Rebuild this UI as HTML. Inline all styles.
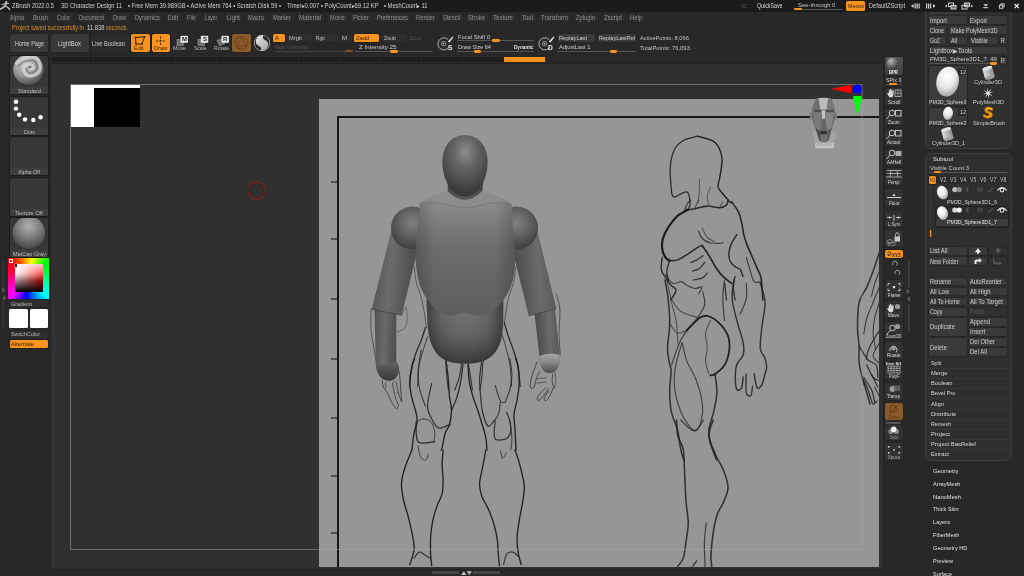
<!DOCTYPE html>
<html><head><meta charset="utf-8"><title>ZBrush</title>
<style>
html,body{margin:0;padding:0;}
body{width:1024px;height:576px;overflow:hidden;position:relative;background:#282828;font-family:"Liberation Sans",sans-serif;}
div,span,svg{position:absolute;}
span{white-space:nowrap;transform-origin:0 50%;display:block;}
</style></head><body><div id="w" style="left:0;top:0;width:1024px;height:576px;will-change:transform;">
<div style="left:925.5px;top:5px;width:85px;height:143px;background:#2f2f2f;border-radius:4px;box-shadow:0 0 0 0.7px #454545;"></div>
<div style="left:925.5px;top:154px;width:85px;height:306.4px;background:#2f2f2f;border-radius:4px;box-shadow:0 0 0 0.7px #454545;"></div>
<div style="left:0px;top:0px;width:1024px;height:11.5px;background:#1b1b1b;"></div>
<div style="left:51px;top:63.6px;width:831.5px;height:505.6px;background:#303030;box-shadow:0 0 0 1px #222;"></div>
<div style="left:52px;top:57px;width:493px;height:4.5px;background:#1d1d1d;"></div>
<div style="left:93px;top:57px;width:1px;height:4.5px;background:#2a2a2a;"></div>
<div style="left:134px;top:57px;width:1px;height:4.5px;background:#2a2a2a;"></div>
<div style="left:175px;top:57px;width:1px;height:4.5px;background:#2a2a2a;"></div>
<div style="left:216px;top:57px;width:1px;height:4.5px;background:#2a2a2a;"></div>
<div style="left:257px;top:57px;width:1px;height:4.5px;background:#2a2a2a;"></div>
<div style="left:298px;top:57px;width:1px;height:4.5px;background:#2a2a2a;"></div>
<div style="left:339px;top:57px;width:1px;height:4.5px;background:#2a2a2a;"></div>
<div style="left:380px;top:57px;width:1px;height:4.5px;background:#2a2a2a;"></div>
<div style="left:421px;top:57px;width:1px;height:4.5px;background:#2a2a2a;"></div>
<div style="left:462px;top:57px;width:1px;height:4.5px;background:#2a2a2a;"></div>
<div style="left:504px;top:57px;width:41px;height:4.5px;background:#f7931e;"></div>
<div style="left:319px;top:99px;width:560.2px;height:468px;background:#969696;"></div>
<svg style="left:0;top:0" width="1024" height="576" viewBox="0 0 1024 576">
<defs>
<radialGradient id="gh" cx="0.5" cy="0.28" r="0.66"><stop offset="0" stop-color="#8e8e8e"/><stop offset="0.35" stop-color="#686868"/><stop offset="0.75" stop-color="#4c4c4c"/><stop offset="1" stop-color="#3a3a3a"/></radialGradient>
<radialGradient id="gs" cx="0.5" cy="0.38" r="0.62"><stop offset="0" stop-color="#808080"/><stop offset="0.55" stop-color="#5e5e5e"/><stop offset="1" stop-color="#3e3e3e"/></radialGradient>
<linearGradient id="gt" x1="0" y1="0" x2="0" y2="1"><stop offset="0" stop-color="#8e8e8e"/><stop offset="0.12" stop-color="#8a8a8a"/><stop offset="0.27" stop-color="#7c7c7c"/><stop offset="0.44" stop-color="#6e6e6e"/><stop offset="0.7" stop-color="#666666"/><stop offset="1" stop-color="#5e5e5e"/></linearGradient>
<linearGradient id="gcl" x1="0" y1="0" x2="0" y2="1"><stop offset="0" stop-color="#626262"/><stop offset="1" stop-color="#3a3a3a"/></linearGradient>
<linearGradient id="gcap" x1="0" y1="0" x2="0" y2="1"><stop offset="0" stop-color="#a8a8a8"/><stop offset="0.45" stop-color="#888"/><stop offset="1" stop-color="#4c4c4c"/></linearGradient>
<linearGradient id="gts" x1="0" y1="0" x2="1" y2="0"><stop offset="0" stop-color="#000" stop-opacity="0.2"/><stop offset="0.2" stop-color="#000" stop-opacity="0"/><stop offset="0.8" stop-color="#000" stop-opacity="0"/><stop offset="1" stop-color="#000" stop-opacity="0.2"/></linearGradient>
<radialGradient id="gb" cx="0.5" cy="0.3" r="0.72"><stop offset="0" stop-color="#727272"/><stop offset="0.45" stop-color="#626262"/><stop offset="0.8" stop-color="#484848"/><stop offset="1" stop-color="#343434"/></radialGradient>
<linearGradient id="gal" x1="0" y1="0" x2="1" y2="0.15"><stop offset="0" stop-color="#505050"/><stop offset="0.45" stop-color="#6b6b6b"/><stop offset="1" stop-color="#484848"/></linearGradient>
<linearGradient id="gar" x1="0" y1="0" x2="1" y2="-0.15"><stop offset="0" stop-color="#4a4a4a"/><stop offset="0.55" stop-color="#6b6b6b"/><stop offset="1" stop-color="#505050"/></linearGradient>
<linearGradient id="gn" x1="0" y1="0" x2="0" y2="1"><stop offset="0" stop-color="#404040"/><stop offset="0.6" stop-color="#4e4e4e"/><stop offset="1" stop-color="#666"/></linearGradient>
</defs>
<path d="M338 567 V117 H879" fill="none" stroke="#161616" stroke-width="2"/>
<path d="M331 182 H338" stroke="#222" stroke-width="1.2"/>
<path d="M331 239 H338" stroke="#222" stroke-width="1.2"/>
<path d="M331 299 H338" stroke="#222" stroke-width="1.2"/>
<path d="M331 359 H338" stroke="#222" stroke-width="1.2"/>
<path d="M331 418 H338" stroke="#222" stroke-width="1.2"/>
<path d="M331 476 H338" stroke="#222" stroke-width="1.2"/>
<path d="M331 533 H338" stroke="#222" stroke-width="1.2"/>
<filter id="bl" x="-5%" y="-5%" width="110%" height="110%"><feGaussianBlur stdDeviation="0.42"/></filter><clipPath id="gc"><rect x="319" y="99" width="560.4" height="468"/></clipPath><g clip-path="url(#gc)"><g filter="url(#bl)">
<path d="M697.8 136.2 C695.5 136.9 687.7 138.1 683.8 140.3 C679.8 142.6 676.6 145.3 674.4 149.7 C672.1 154.1 670.8 160.6 670.3 166.9 C669.8 173.1 670.7 182.2 671.2 187.2 C671.8 192.2 671.1 196.1 673.8 196.9 C676.4 197.7 684.2 190.6 686.9 191.9 C689.6 193.1 690.0 201.2 690.0 204.4 C690.0 207.5 687.4 209.6 686.9 210.6" fill="none" stroke="#1e1e1e" stroke-width="1.30" stroke-opacity="0.89" stroke-linecap="round"/>
<path d="M697.8 136.2 C700.7 137.3 711.0 139.0 715.0 142.5 C719.0 146.0 721.0 151.9 721.9 157.5 C722.7 163.1 720.6 171.3 720.0 176.2 C719.4 181.2 717.5 184.1 718.1 187.2 C718.8 190.3 721.7 192.4 723.8 195.0 C725.8 197.6 729.5 201.5 730.6 202.8" fill="none" stroke="#1e1e1e" stroke-width="1.43" stroke-opacity="0.95" stroke-linecap="round"/>
<path d="M699.4 179.4 C699.4 181.5 699.6 188.0 699.4 191.9 C699.1 195.8 698.1 201.0 697.8 202.8" fill="none" stroke="#1e1e1e" stroke-width="0.91" stroke-opacity="0.63" stroke-linecap="round"/>
<path d="M710.3 187.2 C709.8 188.8 707.4 193.7 707.2 196.6 C706.9 199.4 708.5 203.1 708.8 204.4" fill="none" stroke="#1e1e1e" stroke-width="0.91" stroke-opacity="0.63" stroke-linecap="round"/>
<path d="M688.2 209.5 C686.5 210.6 681.0 212.9 677.8 215.6 C674.6 218.4 671.6 222.3 669.1 226.0 C666.6 229.8 664.2 234.4 663.0 238.2 C661.9 242.0 661.9 245.6 662.2 248.6 C662.4 251.6 663.6 254.4 664.8 256.4 C665.9 258.4 668.4 260.0 669.1 260.8" fill="none" stroke="#1e1e1e" stroke-width="2.21" stroke-opacity="1.00" stroke-linecap="round"/>
<path d="M669.1 260.8 C670.5 260.6 674.6 261.1 677.8 259.9 C681.0 258.7 684.7 256.0 688.2 253.8 C691.7 251.6 696.3 248.3 698.6 246.9 C700.9 245.5 701.5 245.7 702.1 245.5" fill="none" stroke="#1e1e1e" stroke-width="1.43" stroke-opacity="0.89" stroke-linecap="round"/>
<path d="M684.7 210.4 C686.5 210.1 691.4 209.4 695.1 208.7 C698.9 208.0 703.2 206.2 707.3 206.1 C711.3 205.9 716.3 208.0 719.4 207.8 C722.6 207.7 724.9 206.5 726.4 205.2 C727.8 203.9 727.8 200.9 728.1 200.0" fill="none" stroke="#1e1e1e" stroke-width="1.56" stroke-opacity="0.89" stroke-linecap="round"/>
<path d="M731.6 201.7 C732.8 203.5 736.8 208.4 738.5 212.2 C740.3 215.9 741.1 220.5 742.0 224.3 C742.9 228.1 742.9 231.2 743.8 234.7 C744.6 238.2 745.8 241.4 747.2 245.1 C748.7 248.9 750.7 253.2 752.4 257.3 C754.2 261.3 756.2 266.0 757.6 269.4 C759.1 272.9 760.2 273.0 761.1 278.1 C762.0 283.2 762.6 296.4 762.8 300.0" fill="none" stroke="#1e1e1e" stroke-width="1.56" stroke-opacity="0.95" stroke-linecap="round"/>
<path d="M698.6 231.2 C699.2 232.4 700.3 236.3 702.1 238.2 C703.8 240.1 706.1 241.7 709.0 242.5 C711.9 243.4 717.1 243.4 719.4 243.4 C721.8 243.4 722.3 242.7 722.9 242.5" fill="none" stroke="#1e1e1e" stroke-width="1.30" stroke-opacity="0.73" stroke-linecap="round"/>
<path d="M702.1 227.8 C703.0 229.4 705.3 235.0 707.3 237.3 C709.3 239.6 713.1 240.9 714.2 241.7" fill="none" stroke="#1e1e1e" stroke-width="1.04" stroke-opacity="0.58" stroke-linecap="round"/>
<path d="M736.8 234.7 C735.9 236.2 732.9 240.5 731.6 243.4 C730.3 246.3 729.3 249.2 729.0 252.1 C728.7 255.0 728.8 258.3 729.9 260.8 C730.9 263.2 733.3 265.4 735.1 266.8 C736.8 268.3 739.0 267.9 740.3 269.4 C741.6 271.0 742.4 275.2 742.9 276.4" fill="none" stroke="#1e1e1e" stroke-width="1.43" stroke-opacity="0.89" stroke-linecap="round"/>
<path d="M702.1 245.5 C703.2 247.2 706.7 251.9 709.0 255.6 C711.3 259.3 713.7 264.2 716.0 267.7 C718.3 271.2 720.3 273.8 722.9 276.4 C725.5 279.0 730.2 282.2 731.6 283.3" fill="none" stroke="#1e1e1e" stroke-width="1.69" stroke-opacity="0.95" stroke-linecap="round"/>
<path d="M690.8 262.5 C691.8 262.1 694.8 261.1 696.9 259.9 C698.9 258.7 701.9 256.3 703.0 255.6" fill="none" stroke="#1e1e1e" stroke-width="1.30" stroke-opacity="0.79" stroke-linecap="round"/>
<path d="M692.5 271.2 C693.7 270.7 697.5 270.0 699.5 268.6 C701.5 267.1 703.8 263.5 704.7 262.5" fill="none" stroke="#1e1e1e" stroke-width="1.30" stroke-opacity="0.79" stroke-linecap="round"/>
<path d="M693.4 279.9 C694.8 279.6 699.8 279.3 702.1 278.1 C704.4 277.0 706.4 273.8 707.3 272.9" fill="none" stroke="#1e1e1e" stroke-width="1.30" stroke-opacity="0.79" stroke-linecap="round"/>
<path d="M662.2 257.3 C662.0 259.3 660.9 266.3 661.3 269.4 C661.7 272.6 663.2 273.8 664.8 276.4 C666.3 279.0 669.0 282.8 670.8 285.1 C672.7 287.4 676.0 287.8 676.0 290.3 C676.0 292.8 671.7 298.4 670.8 300.0" fill="none" stroke="#1e1e1e" stroke-width="1.43" stroke-opacity="0.89" stroke-linecap="round"/>
<path d="M665.6 274.7 C666.8 276.1 670.0 282.2 672.6 283.3 C675.2 284.5 678.9 281.3 681.2 281.6 C683.6 281.9 684.1 283.9 686.5 285.1 C688.8 286.2 692.5 288.3 695.1 288.5 C697.7 288.8 701.5 285.9 702.1 286.8 C702.7 287.7 699.2 292.6 698.6 293.8" fill="none" stroke="#1e1e1e" stroke-width="1.17" stroke-opacity="0.73" stroke-linecap="round"/>
<path d="M724.7 283.3 L726.4 300.0" fill="none" stroke="#1e1e1e" stroke-width="1.30" stroke-opacity="0.84" stroke-linecap="round"/>
<path d="M735.1 276.4 C734.8 278.1 733.3 282.9 733.3 286.8 C733.3 290.7 734.8 297.8 735.1 300.0" fill="none" stroke="#1e1e1e" stroke-width="1.30" stroke-opacity="0.84" stroke-linecap="round"/>
<path d="M746.4 257.3 C746.9 259.3 748.5 265.4 749.8 269.4 C751.1 273.5 752.3 279.6 754.2 281.6 C756.0 283.6 760.0 281.6 761.1 281.6" fill="none" stroke="#1e1e1e" stroke-width="1.17" stroke-opacity="0.73" stroke-linecap="round"/>
<path d="M684.7 210.4 C685.2 209.3 686.3 205.2 687.3 203.5 C688.3 201.7 690.2 200.6 690.8 200.0" fill="none" stroke="#1e1e1e" stroke-width="1.17" stroke-opacity="0.73" stroke-linecap="round"/>
<path d="M695.1 207.8 L698.6 200.0" fill="none" stroke="#1e1e1e" stroke-width="1.04" stroke-opacity="0.63" stroke-linecap="round"/>
<path d="M719.4 207.8 L722.9 201.7" fill="none" stroke="#1e1e1e" stroke-width="1.04" stroke-opacity="0.63" stroke-linecap="round"/>
<path d="M665.0 280.0 C665.5 283.1 667.3 291.5 668.1 298.8 C668.9 306.0 669.8 315.4 669.7 323.8 C669.6 332.1 667.5 342.0 667.5 348.8 C667.5 355.5 669.1 360.7 669.7 364.4 C670.3 368.0 671.2 366.5 671.2 370.6 C671.2 374.8 669.7 382.6 669.7 389.4 C669.7 396.1 669.9 404.5 671.2 411.2 C672.6 418.0 675.9 423.8 677.5 430.0 C679.1 436.2 679.6 443.8 680.6 448.8 C681.7 453.8 683.2 458.1 683.8 460.0" fill="none" stroke="#1e1e1e" stroke-width="1.56" stroke-opacity="0.84" stroke-linecap="round"/>
<path d="M686.9 330.0 C689.0 328.0 696.0 320.5 699.4 318.1 C702.8 315.8 704.1 315.3 707.2 315.9 C710.3 316.6 714.7 319.1 718.1 322.2 C721.5 325.3 725.6 330.3 727.5 334.7 C729.4 339.1 729.8 343.8 729.4 348.8 C729.0 353.7 727.3 360.2 725.0 364.4 C722.7 368.5 718.1 371.9 715.6 373.8 C713.2 375.6 711.2 375.1 710.3 375.3" fill="none" stroke="#1e1e1e" stroke-width="1.82" stroke-opacity="0.95" stroke-linecap="round"/>
<path d="M710.3 320.6 C709.5 322.7 706.1 328.7 705.6 333.1 C705.1 337.6 707.2 342.5 707.2 347.2 C707.2 351.9 705.4 356.8 705.6 361.2 C705.9 365.7 708.2 371.7 708.8 373.8" fill="none" stroke="#1e1e1e" stroke-width="1.04" stroke-opacity="0.63" stroke-linecap="round"/>
<path d="M715.0 373.8 C715.3 376.9 717.1 386.2 716.9 392.5 C716.7 398.8 715.1 405.0 713.8 411.2 C712.4 417.5 709.3 424.8 708.8 430.0 C708.2 435.2 709.0 437.5 710.3 442.5 C711.6 447.5 715.5 457.1 716.6 460.0" fill="none" stroke="#1e1e1e" stroke-width="1.56" stroke-opacity="0.84" stroke-linecap="round"/>
<path d="M682.2 342.5 C683.0 345.6 684.5 355.0 686.9 361.2 C689.2 367.5 693.6 372.7 696.2 380.0 C698.9 387.3 701.7 398.2 702.5 405.0 C703.3 411.8 702.3 416.4 701.2 420.6 C700.2 424.9 698.1 429.6 696.2 430.6 C694.4 431.7 692.6 430.1 690.0 426.9 C687.4 423.6 683.2 418.0 680.6 411.2 C678.0 404.5 675.2 394.1 674.4 386.2 C673.6 378.4 674.6 371.7 675.9 364.4 C677.2 357.1 681.1 346.1 682.2 342.5" fill="none" stroke="#1e1e1e" stroke-width="1.17" stroke-opacity="0.68" stroke-linecap="round"/>
<path d="M733.8 280.0 C733.5 283.1 731.7 292.0 732.2 298.8 C732.7 305.5 735.1 313.3 736.9 320.6 C738.7 327.9 742.1 336.8 743.1 342.5 C744.2 348.2 744.2 351.4 743.1 355.0 C742.1 358.6 738.2 360.7 736.9 364.4 C735.6 368.0 735.3 372.7 735.3 376.9 C735.3 381.0 735.8 387.6 736.9 389.4 C737.9 391.2 740.5 389.9 741.6 387.8 C742.6 385.7 742.9 378.7 743.1 376.9" fill="none" stroke="#1e1e1e" stroke-width="1.43" stroke-opacity="0.84" stroke-linecap="round"/>
<path d="M760.3 283.1 C761.1 286.2 764.7 294.6 765.0 301.9 C765.3 309.2 762.7 319.1 761.9 326.9 C761.1 334.7 759.8 343.5 760.3 348.8 C760.8 354.0 764.0 355.0 765.0 358.1 C766.0 361.2 766.6 364.9 766.6 367.5 C766.6 370.1 765.8 370.9 765.0 373.8 C764.2 376.6 763.2 382.3 761.9 384.7 C760.6 387.0 758.5 389.6 757.2 387.8 C755.9 386.0 754.6 376.1 754.1 373.8" fill="none" stroke="#1e1e1e" stroke-width="1.43" stroke-opacity="0.84" stroke-linecap="round"/>
<path d="M746.2 373.8 C746.2 376.9 745.5 388.9 746.2 392.5 C747.0 396.1 749.9 396.7 750.9 395.6 C752.0 394.6 752.2 387.8 752.5 386.2" fill="none" stroke="#1e1e1e" stroke-width="1.30" stroke-opacity="0.84" stroke-linecap="round"/>
<path d="M746.2 283.1 C746.2 285.7 747.3 293.5 746.2 298.8 C745.2 304.0 741.0 311.8 740.0 314.4" fill="none" stroke="#1e1e1e" stroke-width="1.17" stroke-opacity="0.73" stroke-linecap="round"/>
<path d="M724.4 280.0 C724.1 283.1 722.8 292.0 722.8 298.8 C722.8 305.5 724.1 317.0 724.4 320.6" fill="none" stroke="#1e1e1e" stroke-width="1.17" stroke-opacity="0.73" stroke-linecap="round"/>
<path d="M671.2 298.8 C672.8 300.8 675.9 308.0 680.6 311.2 C685.3 314.5 696.2 317.0 699.4 318.1" fill="none" stroke="#1e1e1e" stroke-width="1.04" stroke-opacity="0.63" stroke-linecap="round"/>
<path d="M669.7 323.8 C671.0 325.3 674.6 332.1 677.5 333.1 C680.4 334.2 685.3 330.5 686.9 330.0" fill="none" stroke="#1e1e1e" stroke-width="1.04" stroke-opacity="0.63" stroke-linecap="round"/>
<path d="M702.8 291.6 C703.1 293.9 705.7 300.7 704.4 305.6 C703.1 310.6 698.6 316.0 695.0 321.2 C691.4 326.5 685.9 331.1 682.5 336.9 C679.1 342.6 676.5 350.9 674.7 355.6 C672.9 360.3 672.1 363.4 671.6 365.0" fill="none" stroke="#1e1e1e" stroke-width="1.17" stroke-opacity="0.73" stroke-linecap="round"/>
<path d="M666.9 280.6 C667.7 284.3 670.0 295.7 671.6 302.5 C673.1 309.3 675.2 314.5 676.2 321.2 C677.3 328.0 677.6 339.5 677.8 343.1" fill="none" stroke="#1e1e1e" stroke-width="1.04" stroke-opacity="0.63" stroke-linecap="round"/>
<path d="M670.0 258.8 C669.5 260.8 667.1 267.6 666.9 271.2 C666.6 274.9 668.2 279.1 668.4 280.6" fill="none" stroke="#1e1e1e" stroke-width="1.30" stroke-opacity="0.84" stroke-linecap="round"/>
<path d="M676.5 420.0 C676.8 422.7 676.8 431.3 677.9 436.2 C679.0 441.2 682.2 443.5 683.3 449.8 C684.4 456.1 684.2 465.6 684.7 474.1 C685.1 482.7 685.4 493.1 686.0 501.2 C686.6 509.3 688.2 516.1 688.2 522.9 C688.2 529.6 686.8 536.0 686.0 541.8 C685.2 547.7 684.7 554.0 683.3 558.1 C682.0 562.1 678.8 564.8 677.9 566.2" fill="none" stroke="#1e1e1e" stroke-width="1.56" stroke-opacity="0.84" stroke-linecap="round"/>
<path d="M713.1 420.0 C712.4 422.7 708.6 430.4 709.0 436.2 C709.5 442.1 713.3 449.3 715.8 455.2 C718.3 461.1 721.9 466.0 723.9 471.4 C726.0 476.8 728.0 482.7 728.0 487.7 C728.0 492.6 725.7 496.7 723.9 501.2 C722.1 505.7 719.0 509.3 717.2 514.7 C715.3 520.2 714.1 526.9 713.1 533.7 C712.1 540.5 711.2 549.9 710.9 555.4 C710.7 560.8 711.6 564.4 711.7 566.2" fill="none" stroke="#1e1e1e" stroke-width="1.56" stroke-opacity="0.84" stroke-linecap="round"/>
<path d="M706.3 522.9 C706.0 526.0 704.7 534.6 704.4 541.8 C704.2 549.0 704.9 562.1 705.0 566.2" fill="none" stroke="#1e1e1e" stroke-width="1.17" stroke-opacity="0.73" stroke-linecap="round"/>
<path d="M692.8 566.2 L696.8 560.8" fill="none" stroke="#1e1e1e" stroke-width="1.17" stroke-opacity="0.84" stroke-linecap="round"/>
<path d="M680.6 420.0 C682.9 421.8 690.3 430.8 694.1 430.8 C698.0 430.8 702.0 421.8 703.6 420.0" fill="none" stroke="#1e1e1e" stroke-width="1.17" stroke-opacity="0.73" stroke-linecap="round"/>
<path d="M414.6 358.3 C414.1 359.7 412.7 362.5 411.9 366.7 C411.1 370.8 409.8 378.1 409.8 383.3 C409.8 388.5 410.8 393.1 411.9 397.9 C412.9 402.8 415.2 408.5 416.0 412.5 C416.9 416.5 417.4 418.4 417.1 421.9 C416.7 425.3 414.8 428.6 414.0 433.3 C413.1 438.0 412.2 447.2 411.9 450.0" fill="none" stroke="#1e1e1e" stroke-width="1.35" stroke-opacity="0.95" stroke-linecap="round"/>
<path d="M421.2 350.0 C420.7 353.5 418.5 364.6 418.1 370.8 C417.8 377.1 418.0 381.6 419.2 387.5 C420.4 393.4 424.4 403.1 425.4 406.2" fill="none" stroke="#1e1e1e" stroke-width="1.10" stroke-opacity="0.79" stroke-linecap="round"/>
<path d="M431.7 383.3 C431.0 387.2 427.5 400.3 427.5 406.2 C427.5 412.2 429.8 415.1 431.7 418.8 C433.6 422.4 435.8 427.3 439.0 428.1 C442.1 429.0 448.5 424.7 450.4 424.0" fill="none" stroke="#1e1e1e" stroke-width="1.20" stroke-opacity="0.84" stroke-linecap="round"/>
<path d="M446.2 361.5 C446.6 364.4 447.8 373.4 448.3 379.2 C448.9 384.9 448.9 390.6 449.4 395.8 C449.9 401.0 451.5 405.6 451.5 410.4 C451.5 415.3 450.4 421.2 449.4 425.0 C448.3 428.8 446.4 429.5 445.2 433.3 C444.0 437.2 442.8 445.1 442.1 447.9 C441.4 450.7 441.2 449.7 441.0 450.0" fill="none" stroke="#1e1e1e" stroke-width="1.35" stroke-opacity="0.95" stroke-linecap="round"/>
<path d="M462.9 364.6 C462.6 367.4 461.9 375.7 460.8 381.2 C459.8 386.8 458.2 393.1 456.7 397.9 C455.1 402.8 452.3 408.3 451.5 410.4" fill="none" stroke="#1e1e1e" stroke-width="1.30" stroke-opacity="0.89" stroke-linecap="round"/>
<path d="M416.0 421.9 C416.4 425.2 415.0 438.4 418.1 441.7 C421.2 445.0 432.0 441.7 434.8 441.7" fill="none" stroke="#1e1e1e" stroke-width="1.30" stroke-opacity="0.89" stroke-linecap="round"/>
<path d="M417.1 421.9 C418.1 421.4 420.9 418.6 423.3 418.8 C425.8 418.9 429.8 420.5 431.7 422.9 C433.6 425.3 434.4 430.2 434.8 433.3 C435.1 436.5 433.9 440.3 433.8 441.7" fill="none" stroke="#1e1e1e" stroke-width="1.00" stroke-opacity="0.73" stroke-linecap="round"/>
<path d="M418.1 445.8 C418.5 447.6 419.0 453.8 420.2 456.2 C421.4 458.7 424.0 460.8 425.4 460.4 C426.8 460.1 428.0 455.2 428.5 454.2" fill="none" stroke="#1e1e1e" stroke-width="1.00" stroke-opacity="0.73" stroke-linecap="round"/>
<path d="M468.1 364.6 C468.3 367.4 468.3 375.7 469.2 381.2 C470.0 386.8 471.8 392.7 473.3 397.9 C474.9 403.1 477.2 408.3 478.5 412.5 C479.9 416.7 480.5 418.8 481.7 422.9 C482.9 427.1 485.0 433.0 485.8 437.5 C486.7 442.0 486.7 447.9 486.9 450.0" fill="none" stroke="#1e1e1e" stroke-width="1.35" stroke-opacity="0.95" stroke-linecap="round"/>
<path d="M481.7 361.5 C481.3 364.4 479.8 373.4 479.6 379.2 C479.4 384.9 480.1 390.3 480.6 395.8 C481.1 401.4 481.5 407.5 482.7 412.5 C483.9 417.5 486.2 424.5 487.9 426.0 C489.7 427.6 492.3 422.6 493.1 421.9" fill="none" stroke="#1e1e1e" stroke-width="1.20" stroke-opacity="0.84" stroke-linecap="round"/>
<path d="M515.6 358.3 C516.0 359.7 517.5 362.5 518.1 366.7 C518.7 370.8 519.3 377.8 519.2 383.3 C519.0 388.9 518.0 394.8 517.1 400.0 C516.2 405.2 514.3 409.7 514.0 414.6 C513.6 419.4 514.7 423.3 515.0 429.2 C515.3 435.1 515.9 446.5 516.0 450.0" fill="none" stroke="#1e1e1e" stroke-width="1.35" stroke-opacity="0.95" stroke-linecap="round"/>
<path d="M509.8 358.3 C510.1 361.1 511.9 369.8 511.9 375.0 C511.9 380.2 510.8 385.2 509.8 389.6 C508.8 393.9 506.3 399.1 505.6 401.0" fill="none" stroke="#1e1e1e" stroke-width="1.10" stroke-opacity="0.79" stroke-linecap="round"/>
<path d="M495.2 385.4 C496.1 388.0 498.7 398.3 500.4 401.0 C502.2 403.8 504.8 401.9 505.6 402.1" fill="none" stroke="#1e1e1e" stroke-width="1.10" stroke-opacity="0.79" stroke-linecap="round"/>
<path d="M500.4 402.1 C500.1 404.2 499.5 411.3 498.3 414.6 C497.1 417.9 494.0 420.7 493.1 421.9" fill="none" stroke="#1e1e1e" stroke-width="1.10" stroke-opacity="0.79" stroke-linecap="round"/>
<path d="M495.2 420.8 C495.0 422.9 494.0 430.2 494.2 433.3 C494.3 436.5 494.2 438.7 496.2 439.6 C498.3 440.5 504.2 439.9 506.7 438.5 C509.1 437.2 510.3 434.2 510.8 431.2 C511.4 428.3 510.5 424.0 509.8 420.8 C509.1 417.7 507.2 413.9 506.7 412.5" fill="none" stroke="#1e1e1e" stroke-width="1.20" stroke-opacity="0.84" stroke-linecap="round"/>
<path d="M500.4 450.0 C500.8 451.4 501.5 458.0 502.5 458.3 C503.5 458.7 506.0 453.1 506.7 452.1" fill="none" stroke="#1e1e1e" stroke-width="1.00" stroke-opacity="0.73" stroke-linecap="round"/>
<path d="M509.8 420.8 C510.1 423.6 511.7 432.6 511.9 437.5 C512.0 442.4 511.0 447.9 510.8 450.0" fill="none" stroke="#1e1e1e" stroke-width="1.00" stroke-opacity="0.73" stroke-linecap="round"/>
<path d="M537.0 361.9 C536.2 364.1 533.3 371.2 532.2 375.2 C531.0 379.3 530.1 384.0 530.3 386.2 C530.5 388.3 532.4 389.2 533.4 388.0 C534.4 386.8 535.4 381.6 536.4 378.9 C537.4 376.1 538.9 372.8 539.4 371.6" fill="none" stroke="#1e1e1e" stroke-width="0.90" stroke-opacity="0.73" stroke-linecap="round"/>
<path d="M537.0 378.9 L546.1 377.7" fill="none" stroke="#1e1e1e" stroke-width="0.80" stroke-opacity="0.63" stroke-linecap="round"/>
<path d="M537.0 383.1 L546.1 381.9" fill="none" stroke="#1e1e1e" stroke-width="0.80" stroke-opacity="0.63" stroke-linecap="round"/>
<path d="M546.1 387.4 C545.1 388.4 541.6 391.5 540.0 393.5 C538.5 395.4 537.1 397.8 537.0 398.9 C536.9 400.0 538.2 400.9 539.4 400.1 C540.7 399.4 542.8 396.6 544.3 394.7 C545.8 392.8 547.8 389.6 548.6 388.6" fill="none" stroke="#1e1e1e" stroke-width="0.90" stroke-opacity="0.73" stroke-linecap="round"/>
<path d="M548.6 391.0 C547.8 392.2 544.7 396.7 544.3 398.3 C543.9 399.9 545.1 401.4 546.1 400.8 C547.1 400.1 549.3 396.7 550.4 394.7 C551.5 392.7 552.4 389.6 552.8 388.6" fill="none" stroke="#1e1e1e" stroke-width="0.90" stroke-opacity="0.73" stroke-linecap="round"/>
<path d="M552.8 374.0 C552.7 375.2 552.0 378.9 552.2 381.3 C552.4 383.7 553.7 387.4 554.0 388.6" fill="none" stroke="#1e1e1e" stroke-width="0.90" stroke-opacity="0.73" stroke-linecap="round"/>
<path d="M555.2 372.8 C555.3 374.0 555.9 377.7 555.8 380.1 C555.7 382.5 554.8 386.2 554.6 387.4" fill="none" stroke="#1e1e1e" stroke-width="0.80" stroke-opacity="0.63" stroke-linecap="round"/>
<path d="M382.3 380.2 C382.5 381.5 382.6 385.3 383.6 387.5 C384.5 389.8 386.7 391.6 387.8 393.6 C388.9 395.6 389.2 397.7 390.2 399.7 C391.2 401.7 392.8 404.2 393.9 405.8 C395.0 407.3 396.2 409.0 396.9 408.8 C397.6 408.6 398.3 406.3 398.1 404.5 C397.9 402.8 396.4 400.7 395.7 398.5 C395.0 396.2 394.4 393.6 393.9 391.2 C393.4 388.7 392.7 385.5 392.7 383.9 C392.7 382.3 393.7 381.9 393.9 381.5" fill="none" stroke="#1e1e1e" stroke-width="0.90" stroke-opacity="0.73" stroke-linecap="round"/>
<path d="M396.3 381.5 C396.5 382.7 397.0 386.3 397.5 388.7 C398.0 391.2 398.6 393.8 399.3 396.0 C400.1 398.3 401.5 402.1 401.8 402.1 C402.1 402.1 401.4 398.5 401.2 396.0 C401.0 393.6 400.8 390.4 400.6 387.5 C400.4 384.7 400.2 381.7 400.0 379.0 C399.8 376.4 399.5 372.9 399.3 371.7" fill="none" stroke="#1e1e1e" stroke-width="0.90" stroke-opacity="0.73" stroke-linecap="round"/>
<path d="M385.4 382.7 L386.0 388.7" fill="none" stroke="#1e1e1e" stroke-width="0.80" stroke-opacity="0.63" stroke-linecap="round"/>
<path d="M396.9 392.4 L398.7 393.6" fill="none" stroke="#1e1e1e" stroke-width="0.80" stroke-opacity="0.63" stroke-linecap="round"/>
<path d="M425.4 327.7 C424.7 329.9 422.6 336.7 420.9 341.2 C419.2 345.7 417.0 349.5 415.3 354.8 C413.6 360.0 411.7 367.6 410.8 372.8 C409.8 378.1 409.8 384.1 409.6 386.4" fill="none" stroke="#1e1e1e" stroke-width="1.30" stroke-opacity="0.89" stroke-linecap="round"/>
<path d="M427.7 336.7 C426.9 339.0 424.6 345.4 423.2 350.3 C421.7 355.1 420.1 360.0 419.1 366.0 C418.2 372.1 417.8 383.0 417.5 386.4" fill="none" stroke="#1e1e1e" stroke-width="1.00" stroke-opacity="0.73" stroke-linecap="round"/>
<path d="M504.4 323.2 C505.0 325.1 506.3 329.9 507.8 334.5 C509.3 339.0 511.7 345.0 513.4 350.3 C515.1 355.5 516.8 360.0 517.9 366.0 C519.1 372.1 519.8 383.0 520.2 386.4" fill="none" stroke="#1e1e1e" stroke-width="1.30" stroke-opacity="0.89" stroke-linecap="round"/>
<path d="M502.1 334.5 C502.9 337.1 505.3 345.0 506.7 350.3 C508.0 355.5 509.2 360.0 510.0 366.0 C510.9 372.1 511.4 383.0 511.6 386.4" fill="none" stroke="#1e1e1e" stroke-width="1.00" stroke-opacity="0.73" stroke-linecap="round"/>
<path d="M371.3 308.5 C371.2 311.7 370.5 321.9 370.8 327.7 C371.1 333.5 372.2 337.8 373.1 343.5 C374.0 349.1 375.7 358.5 376.2 361.5" fill="none" stroke="#1e1e1e" stroke-width="0.90" stroke-opacity="0.63" stroke-linecap="round"/>
<path d="M401.7 315.3 C402.5 314.0 405.5 305.7 406.3 307.4 C407.0 309.1 407.8 321.3 406.3 325.4 C404.8 329.6 398.7 331.1 397.2 332.2" fill="none" stroke="#1e1e1e" stroke-width="0.80" stroke-opacity="0.53" stroke-linecap="round"/>
<path d="M556.3 293.8 C556.9 296.5 559.5 302.9 559.9 309.6 C560.4 316.4 558.9 326.9 559.0 334.5 C559.1 342.0 560.1 351.4 560.4 354.8" fill="none" stroke="#1e1e1e" stroke-width="0.90" stroke-opacity="0.63" stroke-linecap="round"/>
<path d="M414.2 266.8 C414.5 269.4 415.1 276.9 416.4 282.6 C417.7 288.2 420.4 293.1 422.0 300.6 C423.7 308.1 425.8 323.2 426.6 327.7" fill="none" stroke="#1e1e1e" stroke-width="0.90" stroke-opacity="0.58" stroke-linecap="round"/>
<path d="M515.7 266.8 C515.3 269.4 514.7 276.9 513.4 282.6 C512.1 288.2 509.3 293.8 507.8 300.6 C506.3 307.4 505.0 319.4 504.4 323.2" fill="none" stroke="#1e1e1e" stroke-width="0.90" stroke-opacity="0.58" stroke-linecap="round"/>
<path d="M445.7 360.4 C445.9 363.2 446.4 372.4 446.9 377.3 C447.3 382.3 448.2 387.9 448.4 390.0" fill="none" stroke="#1e1e1e" stroke-width="1.10" stroke-opacity="0.84" stroke-linecap="round"/>
<path d="M483.0 360.4 C482.8 363.2 482.3 372.4 481.8 377.3 C481.4 382.3 480.3 387.9 480.0 390.0" fill="none" stroke="#1e1e1e" stroke-width="1.10" stroke-opacity="0.84" stroke-linecap="round"/>
<path d="M461.5 363.8 C461.2 366.0 460.4 373.0 459.3 377.3 C458.1 381.7 455.5 387.9 454.8 390.0" fill="none" stroke="#1e1e1e" stroke-width="1.10" stroke-opacity="0.84" stroke-linecap="round"/>
<path d="M468.3 363.8 C468.7 366.0 469.9 373.0 470.6 377.3 C471.2 381.7 472.1 387.9 472.4 390.0" fill="none" stroke="#1e1e1e" stroke-width="1.10" stroke-opacity="0.84" stroke-linecap="round"/>
<path d="M411.9 450.0 C410.7 453.1 406.3 463.2 404.6 468.8 C402.8 474.3 401.6 478.1 401.5 483.3 C401.3 488.5 402.3 494.1 403.5 500.0 C404.8 505.9 407.2 512.5 408.8 518.8 C410.3 525.0 412.0 532.3 412.9 537.5 C413.8 542.7 414.5 545.5 414.0 550.0 C413.4 554.5 410.5 562.2 409.8 564.6" fill="none" stroke="#1e1e1e" stroke-width="1.35" stroke-opacity="0.95" stroke-linecap="round"/>
<path d="M443.1 450.0 C443.0 452.4 442.1 459.7 442.1 464.6 C442.1 469.4 443.1 474.3 443.1 479.2 C443.1 484.0 443.1 489.2 442.1 493.8 C441.0 498.3 438.4 501.7 436.9 506.2 C435.3 510.8 433.8 515.6 432.7 520.8 C431.7 526.0 431.0 531.9 430.6 537.5 C430.3 543.1 430.5 549.5 430.6 554.2 C430.8 558.9 431.5 563.7 431.7 565.6" fill="none" stroke="#1e1e1e" stroke-width="1.35" stroke-opacity="0.95" stroke-linecap="round"/>
<path d="M414.0 558.3 C414.8 557.3 417.3 552.6 419.2 552.1 C421.1 551.6 423.5 554.2 425.4 555.2 C427.3 556.2 429.8 557.8 430.6 558.3" fill="none" stroke="#1e1e1e" stroke-width="1.10" stroke-opacity="0.84" stroke-linecap="round"/>
<path d="M485.8 450.0 C485.3 452.8 483.8 461.1 482.7 466.7 C481.7 472.2 479.8 478.5 479.6 483.3 C479.4 488.2 480.1 491.3 481.7 495.8 C483.2 500.3 486.9 505.6 489.0 510.4 C491.0 515.3 492.8 520.1 494.2 525.0 C495.6 529.9 496.6 534.7 497.3 539.6 C498.0 544.4 498.0 549.8 498.3 554.2 C498.7 558.5 499.2 563.7 499.4 565.6" fill="none" stroke="#1e1e1e" stroke-width="1.35" stroke-opacity="0.95" stroke-linecap="round"/>
<path d="M515.0 450.0 C515.7 452.1 518.0 458.3 519.2 462.5 C520.4 466.7 521.4 470.8 522.3 475.0 C523.2 479.2 524.4 482.6 524.4 487.5 C524.4 492.4 523.2 498.6 522.3 504.2 C521.4 509.7 520.0 515.3 519.2 520.8 C518.3 526.4 517.3 532.3 517.1 537.5 C516.9 542.7 517.4 547.6 518.1 552.1 C518.8 556.6 520.7 562.5 521.2 564.6" fill="none" stroke="#1e1e1e" stroke-width="1.35" stroke-opacity="0.95" stroke-linecap="round"/>
<path d="M503.5 564.6 C504.1 562.8 505.1 556.2 506.7 554.2 C508.2 552.1 511.0 551.7 512.9 552.1 C514.8 552.4 517.3 555.6 518.1 556.2" fill="none" stroke="#1e1e1e" stroke-width="1.10" stroke-opacity="0.84" stroke-linecap="round"/>
<path d="M879.4 252.5 C878.3 255.6 875.2 265.5 873.1 271.2 C871.0 277.0 869.2 281.7 866.9 286.9 C864.5 292.1 860.6 295.7 859.1 302.5 C857.5 309.3 857.5 320.2 857.5 327.5 C857.5 334.8 858.8 340.5 859.1 346.2 C859.3 352.0 858.5 356.7 859.1 361.9 C859.6 367.1 860.9 372.3 862.2 377.5 C863.5 382.7 865.6 388.7 866.9 393.1 C868.2 397.6 869.5 402.2 870.0 404.1" fill="none" stroke="#1e1e1e" stroke-width="1.50" stroke-opacity="0.84" stroke-linecap="round"/>
<path d="M879.4 271.2 C878.6 273.3 876.0 279.6 874.7 283.8 C873.4 287.9 872.1 294.2 871.6 296.2" fill="none" stroke="#1e1e1e" stroke-width="1.12" stroke-opacity="0.73" stroke-linecap="round"/>
<path d="M879.4 330.6 C877.8 333.2 872.1 341.6 870.0 346.2 C867.9 350.9 865.8 355.6 866.9 358.8 C867.9 361.9 874.4 361.9 876.2 365.0 C878.1 368.1 877.6 375.4 877.8 377.5" fill="none" stroke="#1e1e1e" stroke-width="1.25" stroke-opacity="0.84" stroke-linecap="round"/>
<path d="M863.8 377.5 C865.1 379.6 869.7 385.8 871.6 390.0 C873.4 394.2 874.2 400.4 874.7 402.5" fill="none" stroke="#1e1e1e" stroke-width="1.25" stroke-opacity="0.84" stroke-linecap="round"/>
<path d="M871.6 374.4 L877.8 386.9" fill="none" stroke="#1e1e1e" stroke-width="1.12" stroke-opacity="0.84" stroke-linecap="round"/>
<path d="M879.4 286.9 C878.3 289.5 875.2 297.3 873.1 302.5 C871.0 307.7 868.4 312.9 866.9 318.1 C865.3 323.3 864.3 331.1 863.8 333.8" fill="none" stroke="#1e1e1e" stroke-width="1.12" stroke-opacity="0.73" stroke-linecap="round"/>
<path d="M879.4 302.5 C878.6 305.1 875.7 312.9 874.7 318.1 C873.6 323.3 873.0 328.5 873.1 333.8 C873.3 339.0 875.2 346.8 875.6 349.4" fill="none" stroke="#1e1e1e" stroke-width="1.12" stroke-opacity="0.73" stroke-linecap="round"/>
<path d="M859.1 346.2 L866.9 358.8" fill="none" stroke="#1e1e1e" stroke-width="1.25" stroke-opacity="0.84" stroke-linecap="round"/>
<path d="M879.4 343.1 C878.3 345.2 873.1 352.2 873.1 355.6 C873.1 359.0 878.3 362.1 879.4 363.4" fill="none" stroke="#1e1e1e" stroke-width="1.12" stroke-opacity="0.73" stroke-linecap="round"/>
<path d="M866.9 365.0 C867.9 367.1 871.0 374.9 873.1 377.5 C875.2 380.1 878.3 380.1 879.4 380.6" fill="none" stroke="#1e1e1e" stroke-width="1.25" stroke-opacity="0.84" stroke-linecap="round"/>
<path d="M862.2 377.5 C863.0 379.1 865.6 383.8 866.9 386.9 C868.2 390.0 869.0 393.4 870.0 396.2 C871.0 399.1 872.0 403.3 873.1 404.1 C874.3 404.8 876.2 401.5 876.9 400.9" fill="none" stroke="#1e1e1e" stroke-width="1.25" stroke-opacity="0.84" stroke-linecap="round"/>
<path d="M874.7 386.9 L879.4 396.2" fill="none" stroke="#1e1e1e" stroke-width="1.12" stroke-opacity="0.73" stroke-linecap="round"/>
</g></g>
<path d="M426.6 292.0 C426.6 293.1 426.5 294.3 426.6 298.4 C426.7 302.5 426.9 310.8 427.2 316.4 C427.5 322.0 427.6 327.3 428.4 332.2 C429.2 337.1 430.4 341.8 432.2 345.7 C434.0 349.6 436.0 353.2 439.0 355.9 C442.0 358.6 445.8 360.7 450.3 362.0 C454.8 363.3 460.8 363.9 466.0 363.8 C471.2 363.7 477.3 363.0 481.8 361.5 C486.3 360.0 490.1 357.8 493.1 354.8 C496.1 351.8 498.3 347.6 499.9 343.5 C501.5 339.4 502.0 334.5 502.6 330.0 C503.2 325.5 503.2 321.7 503.3 316.4 C503.4 311.1 503.3 302.5 503.3 298.4 C503.3 294.3 503.3 293.1 503.3 292.0 Z" fill="url(#gb)"/>
<path d="M426.6 292.0 C426.6 293.1 426.5 294.3 426.6 298.4 C426.7 302.5 426.9 310.8 427.2 316.4 C427.5 322.0 427.6 327.3 428.4 332.2 C429.2 337.1 430.4 341.8 432.2 345.7 C434.0 349.6 436.0 353.2 439.0 355.9 C442.0 358.6 445.8 360.7 450.3 362.0 C454.8 363.3 460.8 363.9 466.0 363.8 C471.2 363.7 477.3 363.0 481.8 361.5 C486.3 360.0 490.1 357.8 493.1 354.8 C496.1 351.8 498.3 347.6 499.9 343.5 C501.5 339.4 502.0 334.5 502.6 330.0 C503.2 325.5 503.2 321.7 503.3 316.4 C503.4 311.1 503.3 302.5 503.3 298.4 C503.3 294.3 503.3 293.1 503.3 292.0 Z" fill="url(#gts)"/>
<path d="M391.4 230.6 L420 240 L401.7 315.3 L371.7 309.2 Z" fill="url(#gal)"/>
<path d="M510 240 L537.3 230.6 L556.3 308.5 L528.8 316 Z" fill="url(#gar)"/>
<circle cx="412.5" cy="228" r="21.5" fill="url(#gs)"/>
<circle cx="516.5" cy="228" r="21.5" fill="url(#gs)"/>
<path d="M374.5 309 L396.3 313.4 L396.2 361.5 Q399.5 366 398.8 371 Q397 381 388.5 380.7 Q377 380 375.8 364 Z" fill="url(#gal)"/>
<path d="M375.8 363.6 Q386 366 396.2 361.5 Q399.5 366 398.8 371 Q397 381 388.5 380.7 Q377 380 375.8 363.6Z" fill="url(#gcl)"/>
<path d="M534.5 313.6 L555 308.4 L559.7 355 Q560 373 549.5 373 Q540 373 539.4 356 Z" fill="url(#gar)"/>
<path d="M539.4 356 Q549 352 559.7 354.8 Q560.4 373 549.5 373 Q540 373 539.4 356Z" fill="url(#gcap)"/>
<path d="M371.7 309.2 L401.7 315.3" stroke="#3a3a3a" stroke-width="0.8" stroke-opacity="0.7"/>
<path d="M528.8 316 L556.3 308.5" stroke="#3a3a3a" stroke-width="0.8" stroke-opacity="0.7"/>
<path d="M447.7 180 H482.8 V196 Q465 212 447.7 196 Z" fill="url(#gn)"/>
<path d="M419.9 203.1 C419.8 204.7 419.6 208.0 419.2 212.6 C418.8 217.2 418.2 224.6 417.6 230.6 C417.0 236.6 416.1 243.4 415.8 248.7 C415.5 254.0 415.5 257.7 415.8 262.2 C416.1 266.7 416.7 271.3 417.6 275.8 C418.5 280.3 419.6 285.2 421.4 289.3 C423.2 293.4 425.8 297.2 428.2 300.6 C430.6 304.0 433.3 307.3 436.1 309.6 C438.9 311.9 442.1 313.7 445.1 314.6 C448.1 315.6 451.4 315.5 454.2 315.3 C457.0 315.1 459.9 313.5 462.1 313.2 C464.4 312.9 465.3 313.3 467.7 313.7 C470.1 314.1 473.5 315.3 476.7 315.3 C479.9 315.3 483.7 314.8 486.9 313.7 C490.1 312.6 493.1 310.9 495.9 308.5 C498.7 306.1 501.4 303.1 503.8 299.5 C506.2 295.9 508.9 291.4 510.6 287.1 C512.3 282.8 513.2 278.4 514.0 273.5 C514.8 268.6 515.1 263.3 515.1 257.7 C515.1 252.1 514.5 245.7 514.0 239.7 C513.5 233.7 512.8 227.5 512.4 221.6 C512.0 215.7 511.8 206.9 511.7 204.0 Q498 195 482.6 190.8 Q465 209 447.4 191 Q432 195 419.9 203.1 Z" fill="url(#gt)"/>
<path d="M419.9 203.1 C419.8 204.7 419.6 208.0 419.2 212.6 C418.8 217.2 418.2 224.6 417.6 230.6 C417.0 236.6 416.1 243.4 415.8 248.7 C415.5 254.0 415.5 257.7 415.8 262.2 C416.1 266.7 416.7 271.3 417.6 275.8 C418.5 280.3 419.6 285.2 421.4 289.3 C423.2 293.4 425.8 297.2 428.2 300.6 C430.6 304.0 433.3 307.3 436.1 309.6 C438.9 311.9 442.1 313.7 445.1 314.6 C448.1 315.6 451.4 315.5 454.2 315.3 C457.0 315.1 459.9 313.5 462.1 313.2 C464.4 312.9 465.3 313.3 467.7 313.7 C470.1 314.1 473.5 315.3 476.7 315.3 C479.9 315.3 483.7 314.8 486.9 313.7 C490.1 312.6 493.1 310.9 495.9 308.5 C498.7 306.1 501.4 303.1 503.8 299.5 C506.2 295.9 508.9 291.4 510.6 287.1 C512.3 282.8 513.2 278.4 514.0 273.5 C514.8 268.6 515.1 263.3 515.1 257.7 C515.1 252.1 514.5 245.7 514.0 239.7 C513.5 233.7 512.8 227.5 512.4 221.6 C512.0 215.7 511.8 206.9 511.7 204.0 Q498 195 482.6 190.8 Q465 209 447.4 191 Q432 195 419.9 203.1 Z" fill="url(#gts)"/>
<path d="M419.9 203.1 Q432 195 447.4 191 Q465 209 482.6 190.8 Q498 195 511.7 204 Q497 200 482 204.5 Q465 209 448 204.5 Q434 200 419.9 203.1Z" fill="#8e8e8e" fill-opacity="0.55"/>
<path d="M421 204 Q434 200.5 448 205 Q465 210 482 205 Q497 200.5 510.5 204.6" fill="none" stroke="#6a6a6a" stroke-width="1" stroke-opacity="0.55"/>
<path d="M465 135 C479 135 488 147 487.6 163 C487 181 478 196.5 465 196.5 C452 196.5 443 181 442.4 163 C442 147 451 135 465 135 Z" fill="url(#gh)"/>
<rect x="70.5" y="84.5" width="791.5" height="465" fill="none" stroke="#a8a8a8" stroke-opacity="0.5" stroke-width="1"/>
<path d="M831 89 L851 84.7 L851 93.3 Z" fill="#ff0000"/>
<circle cx="857.3" cy="89" r="4.6" fill="#0000ff"/>
<path d="M853 96 L862 96 L857.5 116 Z" fill="#00ff00"/>
<circle cx="256.5" cy="190.5" r="8.9" fill="none" stroke="#981a1a" stroke-width="0.95"/><circle cx="256.5" cy="190.5" r="7.2" fill="none" stroke="#5e1616" stroke-width="0.75"/>
</svg>
<div style="left:71.3px;top:85px;width:68.7px;height:41.5px;background:#ffffff;"></div>
<div style="left:94px;top:88px;width:46px;height:38.5px;background:#000000;"></div>
<svg style="left:0;top:0" width="12" height="11" viewBox="0 0 12 11"><g fill="none" stroke="#c0c0c0" stroke-linecap="round" stroke-linejoin="round"><circle cx="6.2" cy="1.9" r="0.7" fill="#c0c0c0" stroke-width="0.6"/><path d="M2 4.7 L4.6 3.7 L8.6 3.5" stroke-width="1.2"/><path d="M6.1 2.6 L5.3 5.8" stroke-width="1.5"/><path d="M5.3 5.8 L2.6 7.8 L0.2 9.2" stroke-width="1.6"/><path d="M5.4 6 L8 7.5 L9.7 9.5" stroke-width="1.3"/></g></svg>
<span style="left:12px;top:0.80px;font-size:6.3px;line-height:10px;color:#d0d0d0;transform:scaleX(0.902);">ZBrush 2022.0.5</span>
<span style="left:60.5px;top:0.80px;font-size:6.3px;line-height:10px;color:#d0d0d0;transform:scaleX(0.909);">3D Character Design 11</span>
<span style="left:128px;top:0.80px;font-size:6.3px;line-height:10px;color:#d0d0d0;transform:scaleX(0.916);">• Free Mem 39.989GB • Active Mem 764 • Scratch Disk 59 •</span>
<span style="left:286.5px;top:0.80px;font-size:6.3px;line-height:10px;color:#d0d0d0;transform:scaleX(0.933);">Timer▸0.007 • PolyCount▸69.12 KP</span>
<span style="left:384px;top:0.80px;font-size:6.3px;line-height:10px;color:#d0d0d0;transform:scaleX(0.915);">• MeshCount▸ 11</span>
<span style="left:740.5px;top:0.80px;font-size:6px;line-height:10px;color:#5a5a5a;transform:scaleX(0.780);">AC</span>
<span style="left:757px;top:0.80px;font-size:6.3px;line-height:10px;color:#d8d8d8;transform:scaleX(0.837);">QuickSave</span>
<span style="left:797.5px;top:-0.20px;font-size:6.0px;line-height:10px;color:#c8c8c8;transform:scaleX(0.983);">See-through  0</span>
<div style="left:794px;top:8.8px;width:49px;height:0.8px;background:#555;"></div>
<div style="left:794px;top:7.8px;width:8px;height:2.4px;background:#f7931e;border-radius:1.2px;"></div>
<div style="left:846px;top:1px;width:19px;height:9.8px;background:#f7931e;border-radius:1.5px;box-shadow:0 0 0 0.6px #1b1b1b;"></div>
<span style="left:847.5px;top:0.90px;font-size:6.2px;line-height:10px;color:#3a2000;transform:scaleX(0.860);">Menus</span>
<span style="left:868.5px;top:0.80px;font-size:6.3px;line-height:10px;color:#d0d0d0;transform:scaleX(0.902);">DefaultZScript</span>
<svg style="left:905px;top:0" width="119" height="12" viewBox="905 0 119 12">
<g fill="#d0d0d0" stroke="none">
<path d="M911 6 L913.5 4 V8Z"/><rect x="914.5" y="3.5" width="1.2" height="5"/><rect x="916.5" y="3.5" width="1.2" height="5"/><rect x="918.5" y="3.5" width="1.2" height="5"/>
<rect x="926" y="3.5" width="1.2" height="5"/><rect x="928" y="3.5" width="1.2" height="5"/><rect x="930" y="3.5" width="1.2" height="5"/><path d="M935.5 6 L933 4 V8Z"/>
<path d="M945 6 L947 4.5 V7.5Z"/><path d="M973 6 L971 4.5 V7.5Z"/>
</g>
<g fill="none" stroke="#d0d0d0" stroke-width="1">
<rect x="948.5" y="3" width="5" height="3.6"/><rect x="951" y="5.4" width="5" height="3.6" fill="#777"/>
<rect x="964.5" y="3" width="5" height="3.6" fill="#777"/><rect x="962" y="5.4" width="5" height="3.6"/>
</g>
<path d="M983.2 4.2 H988.2 L985.7 6.6Z" fill="#e0e0e0"/><rect x="983.2" y="7.2" width="5" height="1" fill="#e0e0e0"/>
<g fill="none" stroke="#e0e0e0" stroke-width="0.9"><rect x="999.4" y="5.2" width="3.4" height="3"/><path d="M1000.8 5.2 V3.8 H1004.2 V6.8 H1002.8"/></g>
<path d="M1014.6 3.9 L1018.8 8.1 M1018.8 3.9 L1014.6 8.1" stroke="#f0f0f0" stroke-width="1.3"/>
</svg>
<div style="left:8px;top:13px;width:18.5px;height:8.5px;background:#2c2c2c;border-radius:2px;box-shadow:0 0 0 0.6px #222;"></div>
<span style="left:10px;top:12.80px;font-size:6.4px;line-height:10px;color:#909090;transform:scaleX(0.855);">Alpha</span>
<div style="left:31px;top:13px;width:19.5px;height:8.5px;background:#2c2c2c;border-radius:2px;box-shadow:0 0 0 0.6px #222;"></div>
<span style="left:33px;top:12.80px;font-size:6.4px;line-height:10px;color:#909090;transform:scaleX(0.897);">Brush</span>
<div style="left:55px;top:13px;width:17.5px;height:8.5px;background:#2c2c2c;border-radius:2px;box-shadow:0 0 0 0.6px #222;"></div>
<span style="left:57px;top:12.80px;font-size:6.4px;line-height:10px;color:#909090;transform:scaleX(0.850);">Color</span>
<div style="left:77px;top:13px;width:29.5px;height:8.5px;background:#2c2c2c;border-radius:2px;box-shadow:0 0 0 0.6px #222;"></div>
<span style="left:79px;top:12.80px;font-size:6.4px;line-height:10px;color:#909090;transform:scaleX(0.857);">Document</span>
<div style="left:111px;top:13px;width:17.5px;height:8.5px;background:#2c2c2c;border-radius:2px;box-shadow:0 0 0 0.6px #222;"></div>
<span style="left:113px;top:12.80px;font-size:6.4px;line-height:10px;color:#909090;transform:scaleX(0.870);">Draw</span>
<div style="left:133px;top:13px;width:29.5px;height:8.5px;background:#2c2c2c;border-radius:2px;box-shadow:0 0 0 0.6px #222;"></div>
<span style="left:135px;top:12.80px;font-size:6.4px;line-height:10px;color:#909090;transform:scaleX(0.890);">Dynamics</span>
<div style="left:166px;top:13px;width:14.5px;height:8.5px;background:#2c2c2c;border-radius:2px;box-shadow:0 0 0 0.6px #222;"></div>
<span style="left:168px;top:12.80px;font-size:6.4px;line-height:10px;color:#909090;transform:scaleX(0.907);">Edit</span>
<div style="left:185px;top:13px;width:13.5px;height:8.5px;background:#2c2c2c;border-radius:2px;box-shadow:0 0 0 0.6px #222;"></div>
<span style="left:187px;top:12.80px;font-size:6.4px;line-height:10px;color:#909090;transform:scaleX(0.873);">File</span>
<div style="left:203px;top:13px;width:16.5px;height:8.5px;background:#2c2c2c;border-radius:2px;box-shadow:0 0 0 0.6px #222;"></div>
<span style="left:205px;top:12.80px;font-size:6.4px;line-height:10px;color:#909090;transform:scaleX(0.750);">Layer</span>
<div style="left:225px;top:13px;width:17.5px;height:8.5px;background:#2c2c2c;border-radius:2px;box-shadow:0 0 0 0.6px #222;"></div>
<span style="left:227px;top:12.80px;font-size:6.4px;line-height:10px;color:#909090;transform:scaleX(0.937);">Light</span>
<div style="left:246px;top:13px;width:20.5px;height:8.5px;background:#2c2c2c;border-radius:2px;box-shadow:0 0 0 0.6px #222;"></div>
<span style="left:248px;top:12.80px;font-size:6.4px;line-height:10px;color:#909090;transform:scaleX(0.900);">Macro</span>
<div style="left:271px;top:13px;width:22.5px;height:8.5px;background:#2c2c2c;border-radius:2px;box-shadow:0 0 0 0.6px #222;"></div>
<span style="left:273px;top:12.80px;font-size:6.4px;line-height:10px;color:#909090;transform:scaleX(0.904);">Marker</span>
<div style="left:297px;top:13px;width:26.5px;height:8.5px;background:#2c2c2c;border-radius:2px;box-shadow:0 0 0 0.6px #222;"></div>
<span style="left:299px;top:12.80px;font-size:6.4px;line-height:10px;color:#909090;transform:scaleX(0.967);">Material</span>
<div style="left:328px;top:13px;width:19.5px;height:8.5px;background:#2c2c2c;border-radius:2px;box-shadow:0 0 0 0.6px #222;"></div>
<span style="left:330px;top:12.80px;font-size:6.4px;line-height:10px;color:#909090;transform:scaleX(0.879);">Movie</span>
<div style="left:351px;top:13px;width:20.5px;height:8.5px;background:#2c2c2c;border-radius:2px;box-shadow:0 0 0 0.6px #222;"></div>
<span style="left:353px;top:12.80px;font-size:6.4px;line-height:10px;color:#909090;transform:scaleX(0.900);">Picker</span>
<div style="left:375px;top:13px;width:35.5px;height:8.5px;background:#2c2c2c;border-radius:2px;box-shadow:0 0 0 0.6px #222;"></div>
<span style="left:377px;top:12.80px;font-size:6.4px;line-height:10px;color:#909090;transform:scaleX(0.898);">Preferences</span>
<div style="left:414px;top:13px;width:23.5px;height:8.5px;background:#2c2c2c;border-radius:2px;box-shadow:0 0 0 0.6px #222;"></div>
<span style="left:416px;top:12.80px;font-size:6.4px;line-height:10px;color:#909090;transform:scaleX(0.905);">Render</span>
<div style="left:441px;top:13px;width:21.5px;height:8.5px;background:#2c2c2c;border-radius:2px;box-shadow:0 0 0 0.6px #222;"></div>
<span style="left:443px;top:12.80px;font-size:6.4px;line-height:10px;color:#909090;transform:scaleX(0.885);">Stencil</span>
<div style="left:466px;top:13px;width:21.5px;height:8.5px;background:#2c2c2c;border-radius:2px;box-shadow:0 0 0 0.6px #222;"></div>
<span style="left:468px;top:12.80px;font-size:6.4px;line-height:10px;color:#909090;transform:scaleX(0.919);">Stroke</span>
<div style="left:491px;top:13px;width:24.5px;height:8.5px;background:#2c2c2c;border-radius:2px;box-shadow:0 0 0 0.6px #222;"></div>
<span style="left:493px;top:12.80px;font-size:6.4px;line-height:10px;color:#909090;transform:scaleX(0.953);">Texture</span>
<div style="left:520px;top:13px;width:15.5px;height:8.5px;background:#2c2c2c;border-radius:2px;box-shadow:0 0 0 0.6px #222;"></div>
<span style="left:522px;top:12.80px;font-size:6.4px;line-height:10px;color:#909090;transform:scaleX(0.937);">Tool</span>
<div style="left:539px;top:13px;width:31.5px;height:8.5px;background:#2c2c2c;border-radius:2px;box-shadow:0 0 0 0.6px #222;"></div>
<span style="left:541px;top:12.80px;font-size:6.4px;line-height:10px;color:#909090;transform:scaleX(0.934);">Transform</span>
<div style="left:574px;top:13px;width:23.5px;height:8.5px;background:#2c2c2c;border-radius:2px;box-shadow:0 0 0 0.6px #222;"></div>
<span style="left:576px;top:12.80px;font-size:6.4px;line-height:10px;color:#909090;transform:scaleX(0.905);">Zplugin</span>
<div style="left:602px;top:13px;width:22.5px;height:8.5px;background:#2c2c2c;border-radius:2px;box-shadow:0 0 0 0.6px #222;"></div>
<span style="left:604px;top:12.80px;font-size:6.4px;line-height:10px;color:#909090;transform:scaleX(0.938);">Zscript</span>
<div style="left:628px;top:13px;width:16.5px;height:8.5px;background:#2c2c2c;border-radius:2px;box-shadow:0 0 0 0.6px #222;"></div>
<span style="left:630px;top:12.80px;font-size:6.4px;line-height:10px;color:#909090;transform:scaleX(0.912);">Help</span>
<span style="left:12px;top:22.60px;font-size:6.3px;line-height:10px;color:#d98d2b;transform:scaleX(0.894);">Project saved successfully in</span>
<span style="left:86.5px;top:22.60px;font-size:6.3px;line-height:10px;color:#cfcfcf;transform:scaleX(0.931);">11.838</span>
<span style="left:106px;top:22.60px;font-size:6.3px;line-height:10px;color:#d98d2b;transform:scaleX(0.873);">seconds.</span>
<div style="left:10px;top:34px;width:38px;height:18px;background:#393939;border-radius:2px;box-shadow:0 0 0 0.6px #1f1f1f;"></div>
<span style="left:14.6px;top:38.60px;font-size:6.4px;line-height:10px;color:#d4d4d4;transform:scaleX(0.858);">Home Page</span>
<div style="left:50.5px;top:34px;width:38px;height:18px;background:#393939;border-radius:2px;box-shadow:0 0 0 0.6px #1f1f1f;"></div>
<span style="left:58px;top:38.60px;font-size:6.4px;line-height:10px;color:#d4d4d4;transform:scaleX(0.924);">LightBox</span>
<div style="left:91px;top:34px;width:38.5px;height:18px;background:#2b2b2b;border-radius:2px;box-shadow:0 0 0 0.6px #232323;"></div>
<span style="left:92.4px;top:38.60px;font-size:6.4px;line-height:10px;color:#cccccc;transform:scaleX(0.892);">Live Boolean</span>
<div style="left:131px;top:34px;width:18.6px;height:18px;background:#f7931e;border-radius:2px;box-shadow:0 0 0 0.6px #1b1b1b;"></div>
<div style="left:151.6px;top:34px;width:18.6px;height:18px;background:#f7931e;border-radius:2px;box-shadow:0 0 0 0.6px #1b1b1b;"></div>
<div style="left:232px;top:34px;width:19px;height:18px;background:#8a5a2b;border-radius:2px;box-shadow:0 0 0 0.6px #1f1f1f;"></div>
<span style="left:133.5px;top:43.00px;font-size:5.8px;line-height:10px;color:#4a2600;transform:scaleX(0.951);">Edit</span>
<span style="left:153.8px;top:43.00px;font-size:5.8px;line-height:10px;color:#4a2600;transform:scaleX(0.961);">Draw</span>
<svg style="left:130px;top:33px" width="125" height="20" viewBox="130 33 125 20">
<g fill="none" stroke="#3a1e00" stroke-width="1"><path d="M135.5 37.5 L144.5 36.8 L142 44 L136 44 Z"/></g>
<g fill="#3a1e00"><rect x="134.7" y="36.7" width="1.6" height="1.6"/><rect x="143.7" y="36" width="1.6" height="1.6"/><rect x="141.3" y="43.2" width="1.6" height="1.6"/><rect x="135.2" y="43.2" width="1.6" height="1.6"/></g>
<g stroke="#3a1e00" stroke-width="1" stroke-dasharray="2 1.2"><path d="M160.5 36.5 V45.5"/><path d="M156 41 H165.5"/></g>
<!-- move / scale / rotate icons -->
<rect x="177" y="39.5" width="6.5" height="6" fill="#6e6e6e" stroke="#999" stroke-width="0.6"/><rect x="180.5" y="35.8" width="7.4" height="7" fill="#e4e4e4"/>
<rect x="198" y="39.5" width="6.5" height="6" fill="#6e6e6e" stroke="#999" stroke-width="0.6"/><rect x="200.8" y="35.8" width="7.4" height="7" fill="#e4e4e4"/>
<path d="M217 40.5 L223 38 L225 43.5 L219.5 46Z" fill="#6e6e6e" stroke="#999" stroke-width="0.6"/><rect x="221.5" y="35.8" width="7.4" height="7" fill="#e4e4e4"/>
<circle cx="241.5" cy="43" r="6.4" fill="none" stroke="#5a3510" stroke-width="0.9" stroke-opacity="0.75"/><path d="M241.5 37.5 L236.8 46.2 H246.2Z" fill="none" stroke="#5a3510" stroke-width="0.8" stroke-opacity="0.7"/>
</svg>
<span style="left:182px;top:34.40px;font-size:5.6px;line-height:10px;color:#222;font-weight:bold;transform:scaleX(1.072);">M</span>
<span style="left:202.6px;top:34.40px;font-size:5.6px;line-height:10px;color:#222;font-weight:bold;transform:scaleX(1.071);">S</span>
<span style="left:223.2px;top:34.40px;font-size:5.6px;line-height:10px;color:#222;font-weight:bold;transform:scaleX(1.088);">R</span>
<span style="left:173px;top:43.20px;font-size:5.8px;line-height:10px;color:#b8b8b8;transform:scaleX(0.917);">Move</span>
<span style="left:193.5px;top:43.20px;font-size:5.8px;line-height:10px;color:#b8b8b8;transform:scaleX(0.862);">Scale</span>
<span style="left:214px;top:43.20px;font-size:5.8px;line-height:10px;color:#b8b8b8;transform:scaleX(0.878);">Rotate</span>
<div style="left:253.5px;top:34px;width:17.5px;height:18px;background:#2c2c2c;border-radius:2px;box-shadow:0 0 0 0.6px #232323;"></div>
<svg style="left:253px;top:34px" width="18" height="18" viewBox="253 34 18 18">
<defs><linearGradient id="sg" x1="0" y1="0" x2="1" y2="1"><stop offset="0" stop-color="#f0f0f0"/><stop offset="1" stop-color="#9a9a9a"/></linearGradient></defs>
<circle cx="262" cy="43" r="7.6" fill="url(#sg)" stroke="#e8e8e8" stroke-width="0.8"/>
<path d="M262 35.6 C257.5 36 255 39.5 256 43 C257 46 260 45.5 261 48 C261.5 49.2 261 50 260.5 50.4 C257 49.5 254.5 46.5 254.5 43 C254.5 39 257.8 35.8 262 35.6Z" fill="#2a2a2a"/>
<path d="M262 50.4 C266.5 50 269 46.5 268 43 C267 40 264 40.5 263 38 C262.5 36.8 263 36 263.5 35.6 C267 36.5 269.5 39.5 269.5 43 C269.5 47 266.2 50.2 262 50.4Z" fill="#2a2a2a"/>
</svg>
<div style="left:273px;top:34px;width:12px;height:8px;background:#f7931e;border-radius:1.5px;box-shadow:0 0 0 0.6px #1b1b1b;"></div>
<span style="left:275.3px;top:33.00px;font-size:6.2px;line-height:10px;color:#3a2000;transform:scaleX(0.967);">A</span>
<div style="left:286.5px;top:34px;width:25px;height:8px;background:#2e2e2e;border-radius:1.5px;box-shadow:0 0 0 0.6px #242424;"></div>
<span style="left:288.5px;top:33.00px;font-size:6.2px;line-height:10px;color:#c0c0c0;transform:scaleX(0.920);">Mrgb</span>
<div style="left:314px;top:34px;width:24.5px;height:8px;background:#2e2e2e;border-radius:1.5px;box-shadow:0 0 0 0.6px #242424;"></div>
<span style="left:316px;top:33.00px;font-size:6.2px;line-height:10px;color:#c0c0c0;transform:scaleX(0.791);">Rgb</span>
<div style="left:340px;top:34px;width:12px;height:8px;background:#2e2e2e;border-radius:1.5px;box-shadow:0 0 0 0.6px #242424;"></div>
<span style="left:342.3px;top:33.00px;font-size:6.2px;line-height:10px;color:#c0c0c0;transform:scaleX(0.968);">M</span>
<span style="left:275px;top:42.20px;font-size:6.2px;line-height:10px;color:#555;transform:scaleX(0.912);">Rgb Intensity</span>
<div style="left:275px;top:50.7px;width:77px;height:0.8px;background:#444;"></div>
<div style="left:345px;top:49.6px;width:7.5px;height:2.8px;background:#7a5228;border-radius:1.4px;"></div>
<div style="left:354px;top:34px;width:25.4px;height:8px;background:#f7931e;border-radius:1.5px;box-shadow:0 0 0 0.6px #1b1b1b;"></div>
<span style="left:356.3px;top:33.00px;font-size:6.2px;line-height:10px;color:#3a2000;transform:scaleX(0.920);">Zadd</span>
<div style="left:381.5px;top:34px;width:24px;height:8px;background:#2e2e2e;border-radius:1.5px;box-shadow:0 0 0 0.6px #242424;"></div>
<span style="left:383.5px;top:33.00px;font-size:6.2px;line-height:10px;color:#c0c0c0;transform:scaleX(0.871);">Zsub</span>
<span style="left:410px;top:33.00px;font-size:6.2px;line-height:10px;color:#555;transform:scaleX(0.912);">Zcut</span>
<span style="left:359px;top:42.40px;font-size:6.2px;line-height:10px;color:#d0d0d0;transform:scaleX(1.008);">Z Intensity 25</span>
<div style="left:355px;top:51.2px;width:77px;height:0.8px;background:#555;"></div>
<div style="left:390px;top:50px;width:7.5px;height:2.8px;background:#f7931e;border-radius:1.4px;"></div>
<div style="left:436px;top:34px;width:18px;height:18px;background:#2b2b2b;border-radius:2px;box-shadow:0 0 0 0.6px #222;"></div>
<div style="left:537px;top:34px;width:18px;height:18px;background:#2b2b2b;border-radius:2px;box-shadow:0 0 0 0.6px #222;"></div>
<svg style="left:435px;top:33px" width="122" height="20" viewBox="435 33 122 20">
<g fill="none" stroke="#c8c8c8" stroke-width="0.8"><path d="M448.5 40 A6 6 0 1 0 449 47"/><circle cx="443.5" cy="43.6" r="2.2" stroke-width="0.6"/><rect x="442.8" y="42.9" width="1.4" height="1.4" fill="#c8c8c8" stroke="none"/></g>
<path d="M448 41.5 L452.5 36.5 L453.3 37.3 L449.5 42.5Z" fill="#e8e8e8"/>
<g fill="none" stroke="#c8c8c8" stroke-width="0.8"><path d="M549.5 40 A6 6 0 1 0 550 47"/><circle cx="544.5" cy="43.6" r="2.2" stroke-width="0.6"/><rect x="543.8" y="42.9" width="1.4" height="1.4" fill="#c8c8c8" stroke="none"/></g>
<path d="M549 41.5 L553.5 36.5 L554.3 37.3 L550.5 42.5Z" fill="#e8e8e8"/>
</svg>
<span style="left:447.6px;top:42.60px;font-size:6.4px;line-height:10px;color:#e8e8e8;font-weight:bold;transform:scaleX(1.031);">S</span>
<span style="left:548.2px;top:42.60px;font-size:6.4px;line-height:10px;color:#e8e8e8;font-weight:bold;transform:scaleX(1.039);">D</span>
<span style="left:457.5px;top:32.00px;font-size:6.2px;line-height:10px;color:#d0d0d0;transform:scaleX(0.929);">Focal Shift 0</span>
<div style="left:457px;top:40.3px;width:77px;height:0.8px;background:#555;"></div>
<div style="left:492px;top:39.2px;width:7.5px;height:2.8px;background:#f7931e;border-radius:1.4px;"></div>
<span style="left:457.5px;top:42.20px;font-size:6.2px;line-height:10px;color:#d0d0d0;transform:scaleX(0.895);">Draw Size 64</span>
<div style="left:457px;top:51px;width:77px;height:0.8px;background:#555;"></div>
<div style="left:473.5px;top:49.8px;width:7.5px;height:2.8px;background:#f7931e;border-radius:1.4px;"></div>
<span style="left:514px;top:41.80px;font-size:5.2px;line-height:10px;color:#e0e0e0;font-weight:bold;transform:scaleX(0.900);">Dynamic</span>
<div style="left:557.5px;top:34px;width:37.5px;height:8px;background:#393939;border-radius:1.5px;box-shadow:0 0 0 0.6px #1f1f1f;"></div>
<span style="left:559.0px;top:33.00px;font-size:6.2px;line-height:10px;color:#d0d0d0;transform:scaleX(0.903);">ReplayLast</span>
<div style="left:598px;top:34px;width:38px;height:8px;background:#393939;border-radius:1.5px;box-shadow:0 0 0 0.6px #1f1f1f;"></div>
<span style="left:599.2px;top:33.00px;font-size:6.2px;line-height:10px;color:#d0d0d0;transform:scaleX(0.893);">ReplayLastRel</span>
<span style="left:558.5px;top:42.20px;font-size:6.2px;line-height:10px;color:#d0d0d0;transform:scaleX(0.923);">AdjustLast 1</span>
<div style="left:557px;top:51px;width:79px;height:0.8px;background:#555;"></div>
<div style="left:609.5px;top:49.8px;width:7.5px;height:2.8px;background:#f7931e;border-radius:1.4px;"></div>
<span style="left:640px;top:33.20px;font-size:6.2px;line-height:10px;color:#c4c4c4;transform:scaleX(0.923);">ActivePoints: 8,066</span>
<span style="left:640px;top:43.20px;font-size:6.2px;line-height:10px;color:#c4c4c4;transform:scaleX(0.948);">TotalPoints: 76,093</span>
<div style="left:9.7px;top:56px;width:38.8px;height:38.4px;background:#373735;border-radius:1.5px;box-shadow:0 0 0 0.8px #181818;"></div>
<div style="left:9.7px;top:87.4px;width:38.8px;height:7px;background:#3e3e3c;border-radius:0 0 1.5px 1.5px;"></div>
<span style="left:17.599999999999998px;top:86.40px;font-size:5.9px;line-height:10px;color:#bcbcbc;transform:scaleX(0.961);">Standard</span>
<div style="left:9.7px;top:96.7px;width:38.8px;height:38px;background:#373735;border-radius:1.5px;box-shadow:0 0 0 0.8px #181818;"></div>
<div style="left:9.7px;top:127.69999999999999px;width:38.8px;height:7px;background:#3e3e3c;border-radius:0 0 1.5px 1.5px;"></div>
<span style="left:23.599999999999998px;top:126.70px;font-size:5.9px;line-height:10px;color:#bcbcbc;transform:scaleX(0.907);">Dots</span>
<div style="left:9.7px;top:137px;width:38.8px;height:38.4px;background:#373735;border-radius:1.5px;box-shadow:0 0 0 0.8px #181818;"></div>
<div style="left:9.7px;top:168.4px;width:38.8px;height:7px;background:#3e3e3c;border-radius:0 0 1.5px 1.5px;"></div>
<span style="left:18.099999999999998px;top:167.40px;font-size:5.9px;line-height:10px;color:#bcbcbc;transform:scaleX(0.898);">Alpha Off</span>
<div style="left:9.7px;top:177.8px;width:38.8px;height:38.2px;background:#373735;border-radius:1.5px;box-shadow:0 0 0 0.8px #181818;"></div>
<div style="left:9.7px;top:209.0px;width:38.8px;height:7px;background:#3e3e3c;border-radius:0 0 1.5px 1.5px;"></div>
<span style="left:15.099999999999998px;top:208.00px;font-size:5.9px;line-height:10px;color:#bcbcbc;transform:scaleX(0.974);">Texture Off</span>
<div style="left:9.7px;top:218px;width:38.8px;height:39px;background:#373735;border-radius:1.5px;box-shadow:0 0 0 0.8px #181818;"></div>
<div style="left:9.7px;top:250px;width:38.8px;height:7px;background:#3e3e3c;border-radius:0 0 1.5px 1.5px;"></div>
<span style="left:12.599999999999998px;top:249.00px;font-size:5.9px;line-height:10px;color:#bcbcbc;transform:scaleX(0.941);">MatCap Gray</span>
<svg style="left:9px;top:55px" width="41" height="205" viewBox="9 55 41 205">
<defs>
<radialGradient id="bs" cx="0.38" cy="0.3" r="0.75"><stop offset="0" stop-color="#c8c8c8"/><stop offset="0.5" stop-color="#9c9c9c"/><stop offset="1" stop-color="#4a4a4a"/></radialGradient>
<radialGradient id="mc" cx="0.5" cy="0.3" r="0.7"><stop offset="0" stop-color="#b0b0b0"/><stop offset="0.5" stop-color="#7e7e7e"/><stop offset="1" stop-color="#464646"/></radialGradient><clipPath id="mcc"><rect x="9.7" y="218" width="38.8" height="32"/></clipPath>
</defs>
<clipPath id="tc"><rect x="9.7" y="56" width="38.8" height="32"/></clipPath>
<g clip-path="url(#tc)"><circle cx="28.4" cy="69.6" r="15.2" fill="url(#bs)"/>
<path d="M16.8 63 C20 59 27 56.5 34.4 57 C38 58 40 62 40.3 68 C40 72 37 75 29.6 76 C26 75.5 24 73 23.6 68 C24 66 26 64.8 29 64.6 C32 64.6 33.8 66 33.4 67.8 C32.8 69 31.6 69.2 30.4 69.2" fill="none" stroke="#d6d6d6" stroke-width="3.4" stroke-linecap="round" stroke-opacity="0.8"/>
<path d="M18.5 66 C22 62 28 60 33 60.5 C36.2 61.5 37.4 64 37.4 68 C37 71 34.5 73 30 73.4 C27.5 73 26.5 71 26.4 68.6" fill="none" stroke="#6e6e6e" stroke-width="1.2" stroke-linecap="round" stroke-opacity="0.75"/>
<ellipse cx="30" cy="67" rx="1.8" ry="1" fill="#6a6a6a" transform="rotate(-25 30 67)"/></g>
<g fill="#ffffff"><circle cx="16" cy="101.8" r="2.2"/><circle cx="16" cy="108.6" r="2.2"/><circle cx="19.2" cy="114.8" r="2.2"/><circle cx="25" cy="119.4" r="2.2"/><circle cx="33.3" cy="120" r="2.2"/><circle cx="40.6" cy="117.2" r="2.2"/></g>
<circle cx="28.8" cy="232.6" r="16.2" fill="url(#mc)" clip-path="url(#mcc)"/>
</svg>
<div style="left:8.3px;top:257.8px;width:41.2px;height:40.8px;background:transparent;background:conic-gradient(from 315deg,#ff0000 0deg,#ff8000 28deg,#ffff00 55deg,#80ff00 75deg,#00ff00 90deg,#00ff80 135deg,#00ffff 180deg,#0080ff 205deg,#0000ff 232deg,#8000ff 252deg,#ff00ff 270deg,#ff0080 315deg,#ff0000 360deg);"></div>
<div style="left:15px;top:264.4px;width:27.8px;height:27.4px;background:transparent;background:linear-gradient(to bottom,rgba(255,255,255,0.8) 0%,rgba(255,255,255,0) 60%),linear-gradient(to bottom,rgba(0,0,0,0) 0%,rgba(0,0,0,0) 30%,#000 100%),linear-gradient(to right,#fff,#ff0000);"></div>
<div style="left:9.4px;top:259.2px;width:3.4px;height:3.8px;background:transparent;border:0.8px solid #fff;box-sizing:border-box;"></div>
<div style="left:15px;top:264.4px;width:2px;height:2.2px;background:#222;box-shadow:0 0 0 0.5px #ccc;"></div>
<div style="left:9.7px;top:300px;width:38.5px;height:7.2px;background:#2e2e2e;border-radius:1.5px;box-shadow:0 0 0 0.6px #242424;"></div>
<span style="left:11.299999999999999px;top:298.60px;font-size:5.9px;line-height:10px;color:#b8b8b8;transform:scaleX(0.928);">Gradient</span>
<div style="left:9.2px;top:309.4px;width:18.8px;height:18.4px;background:#ffffff;border-radius:1.5px;"></div>
<div style="left:30px;top:309.4px;width:18.2px;height:18.4px;background:#ffffff;border-radius:1.5px;"></div>
<div style="left:9.7px;top:330.5px;width:38.5px;height:7.2px;background:#2e2e2e;border-radius:1.5px;box-shadow:0 0 0 0.6px #242424;"></div>
<span style="left:11.1px;top:329.10px;font-size:5.9px;line-height:10px;color:#b8b8b8;transform:scaleX(0.921);">SwitchColor</span>
<div style="left:9.7px;top:340.3px;width:38.5px;height:7.5px;background:#f7931e;border-radius:1.5px;box-shadow:0 0 0 0.6px #1b1b1b;"></div>
<span style="left:11.299999999999999px;top:339.05px;font-size:5.9px;line-height:10px;color:#3a2000;transform:scaleX(0.974);">Alternate</span>
<div style="left:2.2px;top:260px;width:2.3px;height:27px;background:#343434;"></div>
<div style="left:2.2px;top:301px;width:2.3px;height:27px;background:#343434;"></div>
<svg style="left:1px;top:286px" width="6" height="16" viewBox="0 0 6 16"><path d="M1 1 L4.5 4 L1 7Z" fill="#555"/><path d="M4.5 9 L1 12 L4.5 15Z" fill="#555"/></svg>
<div style="left:432px;top:571.3px;width:26.6px;height:3.2px;background:#464646;"></div>
<div style="left:473.4px;top:571.3px;width:27px;height:3.2px;background:#464646;"></div>
<svg style="left:459.6px;top:570.3px" width="13" height="6" viewBox="0 0 13 6"><path d="M1 5 L3.8 1.2 L6.4 5Z" fill="#bbb"/><path d="M6.6 1.2 L12 1.2 L9.3 5Z" fill="#bbb"/></svg>
<div style="left:885px;top:57.4px;width:17.6px;height:17.2px;background:transparent;border-radius:2px;box-shadow:0 0 0 0.6px #222;background:linear-gradient(#565656,#3c3c3c);"></div>
<span style="left:886.3px;top:74.80px;font-size:5.8px;line-height:10px;color:#dcdcdc;transform:scaleX(0.919);">SPix 3</span>
<div style="left:886px;top:83.6px;width:16px;height:0.7px;background:#555;"></div>
<div style="left:889.2px;top:82.8px;width:7.5px;height:2.5px;background:#f7931e;border-radius:1.2px;"></div>
<div style="left:885px;top:87.6px;width:17.6px;height:17.4px;background:#323232;border-radius:2px;box-shadow:0 0 0 0.6px #222;"></div>
<span style="left:887.55px;top:96.70px;font-size:5.7px;line-height:10px;color:#dcdcdc;transform:scaleX(0.877);">Scroll</span>
<div style="left:885px;top:108.5px;width:17.6px;height:16.6px;background:#323232;border-radius:2px;box-shadow:0 0 0 0.6px #222;"></div>
<span style="left:888.05px;top:116.80px;font-size:5.7px;line-height:10px;color:#dcdcdc;transform:scaleX(0.789);">Zoom</span>
<div style="left:885px;top:128.5px;width:17.6px;height:17px;background:#323232;border-radius:2px;box-shadow:0 0 0 0.6px #222;"></div>
<span style="left:887.3px;top:137.20px;font-size:5.7px;line-height:10px;color:#dcdcdc;transform:scaleX(0.821);">Actual</span>
<div style="left:885px;top:148.5px;width:17.6px;height:16.6px;background:#323232;border-radius:2px;box-shadow:0 0 0 0.6px #222;"></div>
<span style="left:886.8px;top:156.80px;font-size:5.7px;line-height:10px;color:#dcdcdc;transform:scaleX(0.789);">AAHalf</span>
<div style="left:885px;top:168px;width:17.6px;height:17px;background:#323232;border-radius:2px;box-shadow:0 0 0 0.6px #222;"></div>
<span style="left:888.05px;top:176.70px;font-size:5.7px;line-height:10px;color:#dcdcdc;transform:scaleX(0.772);">Persp</span>
<div style="left:885px;top:188.5px;width:17.6px;height:17.5px;background:#323232;border-radius:2px;box-shadow:0 0 0 0.6px #222;"></div>
<span style="left:888.55px;top:197.70px;font-size:5.7px;line-height:10px;color:#dcdcdc;transform:scaleX(0.809);">Floor</span>
<div style="left:885px;top:210.5px;width:17.6px;height:16.6px;background:#323232;border-radius:2px;box-shadow:0 0 0 0.6px #222;"></div>
<span style="left:887.8px;top:218.80px;font-size:5.7px;line-height:10px;color:#dcdcdc;transform:scaleX(0.743);">L.Sym</span>
<div style="left:885px;top:230px;width:17.6px;height:16.6px;background:#323232;border-radius:2px;box-shadow:0 0 0 0.6px #222;"></div>
<div style="left:885px;top:250.3px;width:17.6px;height:7.8px;background:#f7931e;border-radius:2px;box-shadow:0 0 0 0.6px #1b1b1b;"></div>
<span style="left:891.6px;top:249.50px;font-size:5.3px;line-height:10px;color:#3a2000;font-weight:bold;transform:scaleX(0.834);">XYZ</span>
<div style="left:885px;top:280px;width:17.6px;height:18px;background:#323232;border-radius:2px;box-shadow:0 0 0 0.6px #222;"></div>
<span style="left:887.55px;top:289.70px;font-size:5.7px;line-height:10px;color:#dcdcdc;transform:scaleX(0.759);">Frame</span>
<div style="left:885px;top:301px;width:17.6px;height:17px;background:#323232;border-radius:2px;box-shadow:0 0 0 0.6px #222;"></div>
<span style="left:888.3px;top:309.70px;font-size:5.7px;line-height:10px;color:#dcdcdc;transform:scaleX(0.789);">Move</span>
<div style="left:885px;top:321.8px;width:17.6px;height:17.2px;background:#323232;border-radius:2px;box-shadow:0 0 0 0.6px #222;"></div>
<span style="left:886.05px;top:330.70px;font-size:5.7px;line-height:10px;color:#dcdcdc;transform:scaleX(0.709);">Zoom3D</span>
<div style="left:885px;top:341.6px;width:17.6px;height:16.6px;background:#323232;border-radius:2px;box-shadow:0 0 0 0.6px #222;"></div>
<span style="left:887.05px;top:349.90px;font-size:5.7px;line-height:10px;color:#dcdcdc;transform:scaleX(0.804);">Rotate</span>
<div style="left:885px;top:361.6px;width:17.6px;height:17.4px;background:#323232;border-radius:2px;box-shadow:0 0 0 0.6px #222;"></div>
<span style="left:888.55px;top:370.70px;font-size:5.7px;line-height:10px;color:#dcdcdc;transform:scaleX(0.721);">PolyF</span>
<div style="left:885px;top:382.5px;width:17.6px;height:17px;background:#323232;border-radius:2px;box-shadow:0 0 0 0.6px #222;"></div>
<span style="left:887.3px;top:391.20px;font-size:5.7px;line-height:10px;color:#dcdcdc;transform:scaleX(0.742);">Transp</span>
<div style="left:885px;top:402.5px;width:17.6px;height:17.8px;background:#8a5a2b;border-radius:2px;box-shadow:0 0 0 0.6px #222;"></div>
<span style="left:888.3px;top:412.00px;font-size:5.7px;line-height:10px;color:#5a3510;transform:scaleX(0.723);">Ghost</span>
<div style="left:885px;top:425px;width:17.6px;height:15.4px;background:#323232;border-radius:2px;box-shadow:0 0 0 0.6px #222;"></div>
<span style="left:889.55px;top:432.10px;font-size:5.7px;line-height:10px;color:#9c9c9c;transform:scaleX(0.745);">Solo</span>
<div style="left:885px;top:443px;width:17.6px;height:17px;background:#323232;border-radius:2px;box-shadow:0 0 0 0.6px #222;"></div>
<span style="left:887.8px;top:451.70px;font-size:5.7px;line-height:10px;color:#b0b0b0;transform:scaleX(0.743);">Xpose</span>
<span style="left:886px;top:418.40px;font-size:4.2px;line-height:10px;color:#999;transform:scaleX(0.918);">Dynamic</span>
<span style="left:886px;top:359.00px;font-size:4.4px;line-height:10px;color:#ddd;font-weight:bold;transform:scaleX(1.077);">line fill</span>
<div style="left:907.8px;top:260.7px;width:2.2px;height:27px;background:#3a3a3a;"></div>
<div style="left:907.8px;top:304px;width:2.2px;height:27px;background:#3a3a3a;"></div>
<svg style="left:905px;top:288px" width="6" height="15" viewBox="0 0 6 15"><path d="M1.5 0.5 L5 3.5 L1.5 6.5Z" fill="#555"/><path d="M5 8 L1.5 11 L5 14Z" fill="#555"/></svg>
<svg style="left:884px;top:56px" width="20" height="410" viewBox="884 56 20 410">
<defs><radialGradient id="bpr" cx="0.35" cy="0.3" r="0.7"><stop offset="0" stop-color="#b8b8b8"/><stop offset="0.6" stop-color="#6e6e6e"/><stop offset="1" stop-color="#3e3e3e"/></radialGradient></defs>
<circle cx="892.6" cy="63.4" r="5.9" fill="url(#bpr)"/>
<g fill="#d8d8d8">
 <!-- scroll hand + grid -->
 <path d="M887.2 93.2 l1 -0.6 l0.6 1 l0 -3.6 l0.9 -0.2 l0.3 2.4 l0.1 -3.2 l0.9 0 l0.3 3.2 l0.3 -2.8 l0.9 0.1 l0 3 l0.5 -2 l0.8 0.3 l-0.4 4.2 l-1 2.2 l-3 0 l-1.4 -2 z"/>
 <rect x="895" y="90" width="6" height="6.5" fill="none" stroke="#bbb" stroke-width="0.8"/><path d="M895 93.2 H901 M898 90 V96.5" stroke="#bbb" stroke-width="0.6"/>
 <!-- zoom / actual / aahalf magnifiers -->
 <g fill="none" stroke="#d0d0d0" stroke-width="0.9"><circle cx="892" cy="113" r="2.8"/><path d="M890 115 L886.5 119"/><rect x="895.5" y="110.5" width="5.5" height="5.5"/>
 <circle cx="892" cy="133" r="2.8"/><path d="M890 135 L886.5 139"/><rect x="895.5" y="130.5" width="5.5" height="5.5"/>
 <circle cx="892" cy="153" r="2.8"/><path d="M890 155 L886.5 159"/></g>
 <rect x="895.5" y="151" width="6" height="5" fill="#aaa"/>
 <!-- persp grid -->
 <g fill="none" stroke="#d0d0d0" stroke-width="0.7"><path d="M887 170.5 H901 M887 173.5 H901 M886 177 H902 M891 170.5 L890 177 M897 170.5 L898 177"/></g>
 <!-- floor -->
 <path d="M887 197.5 H901" stroke="#d0d0d0" stroke-width="1"/><path d="M894 193.5 l1.5 2.5 h-3z"/>
 <!-- lsym -->
 <g stroke="#d0d0d0" stroke-width="0.8"><path d="M894 215 V221 M887 217.5 H892 M896 217.5 H901"/></g><path d="M889 216 l1.5 1.5 l-1.5 1.5z M899 216 l-1.5 1.5 l1.5 1.5z"/>
 <!-- lock -->
 <rect x="894.5" y="236.5" width="5.5" height="5" fill="#c8c8c8"/><path d="M895.5 236.5 v-1.8 a1.8 1.8 0 0 1 3.6 0 v1.8" fill="none" stroke="#c8c8c8" stroke-width="0.9"/>
 <ellipse cx="890" cy="241.5" rx="3" ry="1.8" fill="none" stroke="#aaa" stroke-width="0.7"/><rect x="888" y="242.5" width="7" height="2.6" fill="none" stroke="#aaa" stroke-width="0.6"/>
 <!-- small rotate icons -->
 <g fill="none" stroke="#c0c0c0" stroke-width="0.8"><path d="M893 265 a2.4 2.4 0 1 1 3.4 0.6"/><path d="M895.4 274 a2.4 2.4 0 1 1 3.4 0.6"/></g>
 <!-- frame -->
 <g fill="none" stroke="#d0d0d0" stroke-width="0.9"><path d="M888 285.6 v-2 h2 M898 283.6 h2 v2 M900 288.6 v2 h-2 M890 290.6 h-2 v-2"/></g><circle cx="894" cy="287.1" r="1.3"/><path d="M887.6 253 a1.8 1.8 0 1 1 1.2 2.4" fill="none" stroke="#3a2000" stroke-width="0.8"/><path d="M887 254.6 l2.2 1.6 l-0.2 -2.2z" fill="#3a2000"/>
 <!-- move hand -->
 <path d="M887.2 308.2 l1 -0.6 l0.6 1 l0 -3.6 l0.9 -0.2 l0.3 2.4 l0.1 -3.2 l0.9 0 l0.3 3.2 l0.3 -2.8 l0.9 0.1 l0 3 l0.5 -2 l0.8 0.3 l-0.4 4.2 l-1 2.2 l-3 0 l-1.4 -2 z"/><circle cx="897.5" cy="306.5" r="2.6" fill="#999"/>
 <!-- zoom3d -->
 <g fill="none" stroke="#d0d0d0" stroke-width="0.9"><circle cx="892.5" cy="328" r="2.8"/><path d="M890.5 330 L887 334"/></g><circle cx="897.5" cy="326.5" r="2.6" fill="#999"/>
 <!-- rotate -->
 <g fill="none" stroke="#d0d0d0" stroke-width="1"><path d="M890 351 a3.6 3.6 0 1 1 6 1.5"/></g><circle cx="893.5" cy="348" r="2.4" fill="#999"/>
 <!-- polyf grid -->
 <g fill="none" stroke="#c8c8c8" stroke-width="0.6"><rect x="888" y="366" width="12" height="7"/><path d="M888 368.3 H900 M888 370.6 H900 M891 366 V373 M894 366 V373 M897 366 V373"/></g>
 <!-- transp -->
 <circle cx="892.5" cy="389" r="3" fill="#999"/><rect x="894" y="385.5" width="6" height="5.5" fill="#666" fill-opacity="0.8"/>
 <!-- ghost -->
 <circle cx="893" cy="409" r="3.4" fill="none" stroke="#5a3510" stroke-width="0.8"/><path d="M889 414 L899 404" stroke="#5a3510" stroke-width="0.8"/>
 <!-- solo -->
 <circle cx="891" cy="431.5" r="2.6" fill="#888"/><circle cx="896.5" cy="431.5" r="2.6" fill="#888"/><circle cx="893.7" cy="429.4" r="2.8" fill="#f0f0f0"/>
 <!-- xpose -->
 <g fill="#d0d0d0"><rect x="888" y="446" width="1.6" height="1.6"/><rect x="898.5" y="446" width="1.6" height="1.6"/><rect x="888" y="452" width="1.6" height="1.6"/><rect x="898.5" y="452" width="1.6" height="1.6"/><rect x="893.2" y="449" width="1.6" height="1.6"/></g>
</g>
</svg>
<span style="left:889.4px;top:66.50px;font-size:5.6px;line-height:10px;color:#f0f0f0;font-weight:bold;transform:scaleX(0.744);">BPR</span>
<svg style="left:806px;top:94px" width="36" height="58" viewBox="806 94 36 58">
<path d="M812.4 130.6 L836.1 131.8 L833.3 148.2 L815.8 148.2Z" fill="#a4a4a4"/>
<path d="M814.8 143 L834.2 143 L833.3 148.2 L815.8 148.2Z" fill="#c4c4c4"/>
<path d="M819.5 137 L828.5 137 L832 146 L816.5 146Z" fill="#b2b2b2"/>
<rect x="809.8" y="113" width="2.4" height="6.5" rx="1" fill="#7c7c7c"/><rect x="834.8" y="113" width="2.4" height="6.5" rx="1" fill="#7c7c7c"/>
<path d="M816.9 98.2 Q823.5 96.6 830.5 98.2 Q834.6 104 835 112.6 L834.2 121 L828.4 141 Q824 143.4 819.6 141 L812.8 121 L811.9 112.6 Q812.4 104 816.9 98.2Z" fill="#6a6a6a"/>
<path d="M811.9 112.6 Q812.4 104 816.9 98.2 L818.6 98 L820.3 110 L814.5 110Z" fill="#6e6e6e"/>
<path d="M835 112.6 Q834.6 104 830.5 98.2 L828.2 98 L826.5 110 L833.4 110Z" fill="#787878"/>
<path d="M818.6 97.9 L828.2 97.9 L826.5 109.8 L820.3 109.8Z" fill="#bcbcbc"/>
<path d="M814.3 109.8 H833.6 V112.2 H814.3Z" fill="#505050"/>
<path d="M821.4 110.3 H825.4 L825 118.8 H822Z" fill="#c2c2c2"/>
<path d="M813 112.4 L821.2 112.4 L821.8 119.5 L820 131 L815.6 128 Z" fill="#7a7a7a"/>
<path d="M834 112.4 L825.8 112.4 L825.2 119.5 L827 131 L831.4 128 Z" fill="#858585"/>
<path d="M821.8 119.5 H825.2 L827 131 H820Z" fill="#666"/>
<path d="M820.2 131.4 Q824 130 827.8 131.4 L827.6 134.6 H820.4Z" fill="#353535"/>
<path d="M819.6 134.6 H828.4 L827.4 141.6 Q824 143 820.6 141.6Z" fill="#707070"/>
<path d="M815.6 128 L820 131 L820.6 141.6 L819.6 141Z" fill="#4e4e4e"/><path d="M831.4 128 L827 131 L827.4 141.6 L828.4 141Z" fill="#5c5c5c"/>
</svg>
<div style="left:929px;top:11.5px;width:38px;height:2px;background:#3a3a3a;border-radius:0 0 1.2px 1.2px;"></div>
<div style="left:929px;top:16.2px;width:38px;height:7.8px;background:#3a3a3a;border-radius:1.2px;box-shadow:0 0 0 0.6px #222;"></div>
<span style="left:929.8px;top:15.60px;font-size:6.3px;line-height:10px;color:#cdcdcd;transform:scaleX(0.952);">Import</span>
<div style="left:969px;top:16.2px;width:38px;height:7.8px;background:#3a3a3a;border-radius:1.2px;box-shadow:0 0 0 0.6px #222;"></div>
<span style="left:969.8px;top:15.60px;font-size:6.3px;line-height:10px;color:#cdcdcd;transform:scaleX(0.934);">Export</span>
<div style="left:929px;top:26.4px;width:16.5px;height:7.6px;background:#3a3a3a;border-radius:1.2px;box-shadow:0 0 0 0.6px #222;"></div>
<span style="left:929.8px;top:25.70px;font-size:6.3px;line-height:10px;color:#cdcdcd;transform:scaleX(0.851);">Clone</span>
<div style="left:948.5px;top:26.4px;width:58.5px;height:7.6px;background:#3a3a3a;border-radius:1.2px;box-shadow:0 0 0 0.6px #222;"></div>
<span style="left:950.6px;top:25.70px;font-size:6.3px;line-height:10px;color:#cdcdcd;transform:scaleX(0.881);">Make PolyMesh3D</span>
<div style="left:929px;top:36.6px;width:17px;height:7.6px;background:#3a3a3a;border-radius:1.2px;box-shadow:0 0 0 0.6px #222;"></div>
<span style="left:929.8px;top:35.90px;font-size:6.3px;line-height:10px;color:#cdcdcd;transform:scaleX(0.816);">GoZ</span>
<div style="left:949px;top:36.6px;width:17.5px;height:7.6px;background:#3a3a3a;border-radius:1.2px;box-shadow:0 0 0 0.6px #222;"></div>
<span style="left:950.6px;top:35.90px;font-size:6.3px;line-height:10px;color:#cdcdcd;transform:scaleX(0.857);">All</span>
<div style="left:969px;top:36.6px;width:28px;height:7.6px;background:#3a3a3a;border-radius:1.2px;box-shadow:0 0 0 0.6px #222;"></div>
<span style="left:971px;top:35.90px;font-size:6.3px;line-height:10px;color:#cdcdcd;transform:scaleX(0.922);">Visible</span>
<div style="left:1000px;top:36.6px;width:7px;height:7.6px;background:#3a3a3a;border-radius:1.2px;box-shadow:0 0 0 0.6px #222;"></div>
<span style="left:1000.8px;top:35.90px;font-size:6.3px;line-height:10px;color:#cdcdcd;transform:scaleX(0.835);">R</span>
<div style="left:929px;top:46.8px;width:78px;height:7.6px;background:#3a3a3a;border-radius:1.2px;box-shadow:0 0 0 0.6px #222;"></div>
<span style="left:929.8px;top:46.10px;font-size:6.3px;line-height:10px;color:#cdcdcd;transform:scaleX(0.971);">Lightbox▶Tools</span>
<span style="left:930px;top:54.20px;font-size:6.2px;line-height:10px;color:#d0d0d0;transform:scaleX(0.967);">PM3D_Sphere3D1_7. 49</span>
<div style="left:929px;top:62.8px;width:68px;height:0.7px;background:#555;"></div>
<div style="left:989.9px;top:61.9px;width:7.5px;height:2.9px;background:#f7931e;border-radius:1.4px;"></div>
<div style="left:1000px;top:57px;width:7px;height:7.4px;background:#3a3a3a;border-radius:1.2px;box-shadow:0 0 0 0.6px #222;"></div>
<span style="left:1000.8px;top:56.20px;font-size:6.3px;line-height:10px;color:#cdcdcd;transform:scaleX(0.835);">R</span>
<div style="left:928.6px;top:66px;width:38.6px;height:39px;background:#3b3b39;border-radius:1.5px;box-shadow:0 0 0 0.6px #1c1c1c;"></div>
<div style="left:928.6px;top:107.7px;width:38.6px;height:17px;background:#3b3b39;border-radius:1.5px;box-shadow:0 0 0 0.6px #1c1c1c;"></div>
<svg style="left:926px;top:64px" width="84" height="84" viewBox="926 64 84 84">
<defs><radialGradient id="eg" cx="0.42" cy="0.3" r="0.75"><stop offset="0" stop-color="#ffffff"/><stop offset="0.55" stop-color="#e8e8e8"/><stop offset="1" stop-color="#9a9a9a"/></radialGradient>
<linearGradient id="cy" x1="0" y1="0" x2="1" y2="0"><stop offset="0" stop-color="#dcdcdc"/><stop offset="1" stop-color="#8e8e8e"/></linearGradient></defs>
<ellipse cx="947.6" cy="81.6" rx="11.2" ry="15" fill="url(#eg)" transform="rotate(10 947.6 81.6)"/>
<ellipse cx="948" cy="113.4" rx="5" ry="6.6" fill="url(#eg)" transform="rotate(8 948 113.4)"/>
<g transform="rotate(-16 988.5 72.6)"><rect x="983.5" y="68" width="10" height="9.6" fill="url(#cy)"/><ellipse cx="988.5" cy="77.6" rx="5" ry="1.8" fill="#a0a0a0"/><ellipse cx="988.5" cy="68" rx="5" ry="1.8" fill="#e2e2e2"/></g>
<g transform="rotate(-16 947.3 133.8)"><rect x="942.3" y="129.2" width="10" height="9.6" fill="url(#cy)"/><ellipse cx="947.3" cy="138.8" rx="5" ry="1.8" fill="#a0a0a0"/><ellipse cx="947.3" cy="129.2" rx="5" ry="1.8" fill="#e2e2e2"/></g>
<path d="M987.19 87.59 L988.52 91.84 L991.53 88.55 L989.47 92.49 L993.91 92.29 L989.66 93.62 L992.95 96.63 L989.01 94.57 L989.21 99.01 L987.88 94.76 L984.87 98.05 L986.93 94.11 L982.49 94.31 L986.74 92.98 L983.45 89.97 L987.39 92.03Z" fill="#dcdcdc"/>
<path d="M991.6 109.2 C989.4 107.2 985.6 108 986 110.4 C986.4 112.6 991.4 112.4 991.2 115 C991 117.4 986.6 117.8 984.4 115.8" fill="none" stroke="#e88a00" stroke-width="2.8" stroke-linecap="round"/>
<path d="M991.2 109 C989.4 107.6 986.4 108.2 986.6 110" fill="none" stroke="#ffd24a" stroke-width="1" stroke-linecap="round"/>
<path d="M990.4 113.6 C991.2 115 990 116.6 987.6 116.6" fill="none" stroke="#ffc020" stroke-width="0.9" stroke-linecap="round"/>
</svg>
<div style="left:958.4px;top:68.8px;width:8px;height:6.4px;background:#2a2a2a;"></div>
<div style="left:958.4px;top:109.2px;width:8px;height:6.4px;background:#2a2a2a;"></div>
<span style="left:959.8px;top:66.80px;font-size:6.2px;line-height:10px;color:#d8d8d8;transform:scaleX(0.870);">12</span>
<span style="left:959.8px;top:107.40px;font-size:6.2px;line-height:10px;color:#d8d8d8;transform:scaleX(0.870);">12</span>
<span style="left:929.2px;top:97.40px;font-size:6.0px;line-height:10px;color:#cdcdcd;transform:scaleX(0.878);">PM3D_Sphere3</span>
<span style="left:929.2px;top:117.60px;font-size:6.0px;line-height:10px;color:#cdcdcd;transform:scaleX(0.878);">PM3D_Sphere3</span>
<span style="left:974.4px;top:77.00px;font-size:6.0px;line-height:10px;color:#cdcdcd;transform:scaleX(0.944);">Cylinder3D</span>
<span style="left:973px;top:97.40px;font-size:6.0px;line-height:10px;color:#cdcdcd;transform:scaleX(0.911);">PolyMesh3D</span>
<span style="left:972.6px;top:117.80px;font-size:6.0px;line-height:10px;color:#cdcdcd;transform:scaleX(0.941);">SimpleBrush</span>
<span style="left:931.6px;top:138.00px;font-size:6.0px;line-height:10px;color:#cdcdcd;transform:scaleX(0.908);">Cylinder3D_1</span>
<span style="left:932.5px;top:154.20px;font-size:6.2px;line-height:10px;color:#e0e0e0;transform:scaleX(0.951);">Subtool</span>
<span style="left:930px;top:163.40px;font-size:6.2px;line-height:10px;color:#cdcdcd;transform:scaleX(0.938);">Visible Count 3</span>
<div style="left:929px;top:171.8px;width:78px;height:0.7px;background:#555;"></div>
<div style="left:934.2px;top:170.8px;width:7px;height:2.4px;background:#f7931e;border-radius:1.2px;"></div>
<div style="left:928.6px;top:176px;width:7.8px;height:7.6px;background:#f7931e;border-radius:1.5px;box-shadow:0 0 0 0.6px #1b1b1b;"></div>
<span style="left:930px;top:174.90px;font-size:6.2px;line-height:10px;color:#3a2000;transform:scaleX(0.738);">V1</span>
<div style="left:938.4px;top:176px;width:8.6px;height:7.6px;background:#2a2a2a;border-radius:1.5px;"></div>
<span style="left:939.6px;top:174.90px;font-size:6.3px;line-height:10px;color:#c0c0c0;transform:scaleX(0.805);">V2</span>
<div style="left:948.4px;top:176px;width:8.6px;height:7.6px;background:#2a2a2a;border-radius:1.5px;"></div>
<span style="left:949.6px;top:174.90px;font-size:6.3px;line-height:10px;color:#c0c0c0;transform:scaleX(0.805);">V3</span>
<div style="left:958.4px;top:176px;width:8.6px;height:7.6px;background:#2a2a2a;border-radius:1.5px;"></div>
<span style="left:959.6px;top:174.90px;font-size:6.3px;line-height:10px;color:#c0c0c0;transform:scaleX(0.805);">V4</span>
<div style="left:968.5999999999999px;top:176px;width:8.6px;height:7.6px;background:#2a2a2a;border-radius:1.5px;"></div>
<span style="left:969.8px;top:174.90px;font-size:6.3px;line-height:10px;color:#c0c0c0;transform:scaleX(0.805);">V5</span>
<div style="left:978.5999999999999px;top:176px;width:8.6px;height:7.6px;background:#2a2a2a;border-radius:1.5px;"></div>
<span style="left:979.8px;top:174.90px;font-size:6.3px;line-height:10px;color:#c0c0c0;transform:scaleX(0.805);">V6</span>
<div style="left:988.8px;top:176px;width:8.6px;height:7.6px;background:#2a2a2a;border-radius:1.5px;"></div>
<span style="left:990px;top:174.90px;font-size:6.3px;line-height:10px;color:#c0c0c0;transform:scaleX(0.805);">V7</span>
<div style="left:999.0px;top:176px;width:8.6px;height:7.6px;background:#2a2a2a;border-radius:1.5px;"></div>
<span style="left:1000.2px;top:174.90px;font-size:6.3px;line-height:10px;color:#c0c0c0;transform:scaleX(0.805);">V8</span>
<div style="left:929.5px;top:186px;width:1px;height:44px;background:#3a3a3a;"></div>
<div style="left:935.5px;top:206.5px;width:72.4px;height:20px;background:#2c2c2c;border-radius:1px;box-shadow:0 0 0 0.7px #1a1a1a;"></div>
<div style="left:935.5px;top:219.3px;width:72.4px;height:7.2px;background:#3c3c3a;border-radius:0 0 1px 1px;"></div>
<svg style="left:928px;top:184px" width="82" height="56" viewBox="928 184 82 56">
<ellipse cx="942.5" cy="192.6" rx="5.4" ry="6.9" fill="url(#eg)" transform="rotate(-20 942.5 192.6)"/>
<ellipse cx="942.5" cy="213" rx="5.4" ry="6.9" fill="url(#eg)" transform="rotate(-20 942.5 213)"/>
<g fill="#bdbdbd"><circle cx="954.8" cy="189.6" r="2.6"/><circle cx="959.2" cy="189.6" r="2.6" fill="#8a8a8a"/></g>
<g fill="#d8d8d8"><circle cx="954.8" cy="210" r="2.6"/><circle cx="959.2" cy="210" r="2.6" fill="#f4f4f4"/></g>
<g fill="#4c4c4c"><path d="M969.5 186.8 a3 3 0 1 0 0 5.8 a4 4 0 0 1 0 -5.8z"/><circle cx="980" cy="189.6" r="2.8" fill-opacity="0.8"/><path d="M987.5 192 L992.6 187.4 L993.4 188.4 L989.4 192.8z"/>
<path d="M969.5 207.2 a3 3 0 1 0 0 5.8 a4 4 0 0 1 0 -5.8z"/><circle cx="980" cy="210" r="2.8" fill-opacity="0.8"/><path d="M987.5 212.4 L992.6 207.8 L993.4 208.8 L989.4 213.2z"/></g>
<g fill="none" stroke="#3a3a3a" stroke-width="0.6"><path d="M980 186.8 V192.4 M980 207.2 V212.8"/></g>
<g fill="none" stroke="#e8e8e8" stroke-width="1.1"><path d="M997.4 190.4 Q1002 184.6 1006.8 190.4"/><circle cx="1002" cy="190" r="1.9"/><path d="M997.4 210.8 Q1002 205 1006.8 210.8"/><circle cx="1002" cy="210.4" r="1.9"/></g>
<rect x="929.9" y="230" width="1.3" height="7" fill="#f7931e"/>
</svg>
<span style="left:947px;top:196.60px;font-size:6.1px;line-height:10px;color:#d4d4d4;transform:scaleX(0.862);">PM3D_Sphere3D1_6</span>
<span style="left:947px;top:217.30px;font-size:6.1px;line-height:10px;color:#e4e4e4;transform:scaleX(0.862);">PM3D_Sphere3D1_7</span>
<div style="left:929px;top:247px;width:38px;height:7.6px;background:#3a3a3a;border-radius:1.2px;box-shadow:0 0 0 0.6px #222;"></div>
<span style="left:929.8px;top:246.30px;font-size:6.3px;line-height:10px;color:#cdcdcd;transform:scaleX(0.961);">List All</span>
<div style="left:969px;top:247px;width:18px;height:7.6px;background:#3a3a3a;border-radius:1.2px;box-shadow:0 0 0 0.6px #222;"></div>
<div style="left:989px;top:247px;width:18px;height:7.6px;background:#303030;border-radius:1.2px;box-shadow:0 0 0 0.6px #222;"></div>
<div style="left:929px;top:257.3px;width:38px;height:7.6px;background:#3a3a3a;border-radius:1.2px;box-shadow:0 0 0 0.6px #222;"></div>
<span style="left:929.8px;top:256.60px;font-size:6.3px;line-height:10px;color:#cdcdcd;transform:scaleX(0.885);">New Folder</span>
<div style="left:969px;top:257.3px;width:18px;height:7.6px;background:#3a3a3a;border-radius:1.2px;box-shadow:0 0 0 0.6px #222;"></div>
<div style="left:989px;top:257.3px;width:18px;height:7.6px;background:#303030;border-radius:1.2px;box-shadow:0 0 0 0.6px #222;"></div>
<svg style="left:968px;top:246px" width="40" height="20" viewBox="968 246 40 20">
<path d="M978 248 L981.2 252.2 H979 V253.8 H977 V252.2 H974.8Z" fill="#e8e8e8"/>
<path d="M998 253.8 L1001.2 249.6 H999 V248 H997 V249.6 H994.8Z" fill="#555"/>
<path d="M974.5 264 V261 Q974.5 259.4 976.5 259.4 H979 V258 L982 260.4 L979 262.8 V261.4 H976.5 V264Z" fill="#e8e8e8"/>
<path d="M994.5 258.5 V261.5 Q994.5 262.6 996 262.6 H999 V261.2 L1002 263.4 L999 265.6 V264.2 H995 Q993 264.2 993 262 V258.5Z" fill="#555"/>
</svg>
<div style="left:929px;top:277.7px;width:38px;height:7.5px;background:#3a3a3a;border-radius:1.2px;box-shadow:0 0 0 0.6px #222;"></div>
<span style="left:929.8px;top:276.95px;font-size:6.3px;line-height:10px;color:#cdcdcd;transform:scaleX(0.882);">Rename</span>
<div style="left:969px;top:277.7px;width:38px;height:7.5px;background:#3a3a3a;border-radius:1.2px;box-shadow:0 0 0 0.6px #222;"></div>
<span style="left:969.8px;top:276.95px;font-size:6.3px;line-height:10px;color:#cdcdcd;transform:scaleX(0.896);">AutoReorder</span>
<div style="left:929px;top:287.6px;width:38px;height:7.5px;background:#3a3a3a;border-radius:1.2px;box-shadow:0 0 0 0.6px #222;"></div>
<span style="left:929.8px;top:286.85px;font-size:6.3px;line-height:10px;color:#cdcdcd;transform:scaleX(0.936);">All Low</span>
<div style="left:969px;top:287.6px;width:38px;height:7.5px;background:#3a3a3a;border-radius:1.2px;box-shadow:0 0 0 0.6px #222;"></div>
<span style="left:969.8px;top:286.85px;font-size:6.3px;line-height:10px;color:#cdcdcd;transform:scaleX(0.944);">All High</span>
<div style="left:929px;top:297.8px;width:38px;height:7.5px;background:#3a3a3a;border-radius:1.2px;box-shadow:0 0 0 0.6px #222;"></div>
<span style="left:929.8px;top:297.05px;font-size:6.3px;line-height:10px;color:#cdcdcd;transform:scaleX(0.886);">All To Home</span>
<div style="left:969px;top:297.8px;width:38px;height:7.5px;background:#3a3a3a;border-radius:1.2px;box-shadow:0 0 0 0.6px #222;"></div>
<span style="left:969.8px;top:297.05px;font-size:6.3px;line-height:10px;color:#cdcdcd;transform:scaleX(0.958);">All To Target</span>
<div style="left:929px;top:308px;width:38px;height:7.5px;background:#3a3a3a;border-radius:1.2px;box-shadow:0 0 0 0.6px #222;"></div>
<span style="left:929.8px;top:307.25px;font-size:6.3px;line-height:10px;color:#cdcdcd;transform:scaleX(0.850);">Copy</span>
<div style="left:969px;top:308px;width:38px;height:7.5px;background:#303030;border-radius:1.2px;box-shadow:0 0 0 0.6px #222;"></div>
<span style="left:969.8px;top:307.25px;font-size:6.3px;line-height:10px;color:#5a5a5a;transform:scaleX(0.869);">Paste</span>
<div style="left:929px;top:318px;width:38px;height:17.6px;background:#3a3a3a;border-radius:1.2px;box-shadow:0 0 0 0.6px #222;"></div>
<span style="left:929.8px;top:322.30px;font-size:6.3px;line-height:10px;color:#cdcdcd;transform:scaleX(0.952);">Duplicate</span>
<div style="left:969px;top:318px;width:38px;height:7.5px;background:#3a3a3a;border-radius:1.2px;box-shadow:0 0 0 0.6px #222;"></div>
<span style="left:969.8px;top:317.25px;font-size:6.3px;line-height:10px;color:#cdcdcd;transform:scaleX(0.921);">Append</span>
<div style="left:969px;top:328.2px;width:38px;height:7.5px;background:#3a3a3a;border-radius:1.2px;box-shadow:0 0 0 0.6px #222;"></div>
<span style="left:969.8px;top:327.45px;font-size:6.3px;line-height:10px;color:#cdcdcd;transform:scaleX(0.984);">Insert</span>
<div style="left:929px;top:338.2px;width:38px;height:17.6px;background:#3a3a3a;border-radius:1.2px;box-shadow:0 0 0 0.6px #222;"></div>
<span style="left:929.8px;top:342.50px;font-size:6.3px;line-height:10px;color:#cdcdcd;transform:scaleX(0.934);">Delete</span>
<div style="left:969px;top:338.2px;width:38px;height:7.5px;background:#3a3a3a;border-radius:1.2px;box-shadow:0 0 0 0.6px #222;"></div>
<span style="left:969.8px;top:337.45px;font-size:6.3px;line-height:10px;color:#cdcdcd;transform:scaleX(0.927);">Del Other</span>
<div style="left:969px;top:348.2px;width:38px;height:7.5px;background:#3a3a3a;border-radius:1.2px;box-shadow:0 0 0 0.6px #222;"></div>
<span style="left:969.8px;top:347.45px;font-size:6.3px;line-height:10px;color:#cdcdcd;transform:scaleX(0.952);">Del All</span>
<span style="left:930.5px;top:358.00px;font-size:6.2px;line-height:10px;color:#d8d8d8;transform:scaleX(0.871);">Split</span>
<div style="left:926px;top:368.03px;width:84px;height:0.7px;background:#383838;"></div>
<span style="left:930.5px;top:368.13px;font-size:6.2px;line-height:10px;color:#d8d8d8;transform:scaleX(0.939);">Merge</span>
<div style="left:926px;top:378.15999999999997px;width:84px;height:0.7px;background:#383838;"></div>
<span style="left:930.5px;top:378.26px;font-size:6.2px;line-height:10px;color:#d8d8d8;transform:scaleX(0.945);">Boolean</span>
<div style="left:926px;top:388.28999999999996px;width:84px;height:0.7px;background:#383838;"></div>
<span style="left:930.5px;top:388.39px;font-size:6.2px;line-height:10px;color:#d8d8d8;transform:scaleX(0.911);">Bevel Pro</span>
<div style="left:926px;top:398.41999999999996px;width:84px;height:0.7px;background:#383838;"></div>
<span style="left:930.5px;top:398.52px;font-size:6.2px;line-height:10px;color:#d8d8d8;transform:scaleX(0.943);">Align</span>
<div style="left:926px;top:408.54999999999995px;width:84px;height:0.7px;background:#383838;"></div>
<span style="left:930.5px;top:408.65px;font-size:6.2px;line-height:10px;color:#d8d8d8;transform:scaleX(0.974);">Distribute</span>
<div style="left:926px;top:418.67999999999995px;width:84px;height:0.7px;background:#383838;"></div>
<span style="left:930.5px;top:418.78px;font-size:6.2px;line-height:10px;color:#d8d8d8;transform:scaleX(0.866);">Remesh</span>
<div style="left:926px;top:428.81px;width:84px;height:0.7px;background:#383838;"></div>
<span style="left:930.5px;top:428.91px;font-size:6.2px;line-height:10px;color:#d8d8d8;transform:scaleX(0.985);">Project</span>
<div style="left:926px;top:438.94px;width:84px;height:0.7px;background:#383838;"></div>
<span style="left:930.5px;top:439.04px;font-size:6.2px;line-height:10px;color:#d8d8d8;transform:scaleX(0.946);">Project BasRelief</span>
<div style="left:926px;top:449.07px;width:84px;height:0.7px;background:#383838;"></div>
<span style="left:930.5px;top:449.17px;font-size:6.2px;line-height:10px;color:#d8d8d8;transform:scaleX(0.933);">Extract</span>
<span style="left:932.8px;top:466.00px;font-size:6.2px;line-height:10px;color:#e0e0e0;transform:scaleX(0.937);">Geometry</span>
<span style="left:932.8px;top:478.82px;font-size:6.2px;line-height:10px;color:#e0e0e0;transform:scaleX(0.918);">ArrayMesh</span>
<span style="left:932.8px;top:491.64px;font-size:6.2px;line-height:10px;color:#e0e0e0;transform:scaleX(0.934);">NanoMesh</span>
<span style="left:932.8px;top:504.46px;font-size:6.2px;line-height:10px;color:#e0e0e0;transform:scaleX(0.892);">Thick Skin</span>
<span style="left:932.8px;top:517.28px;font-size:6.2px;line-height:10px;color:#e0e0e0;transform:scaleX(0.914);">Layers</span>
<span style="left:932.8px;top:530.10px;font-size:6.2px;line-height:10px;color:#e0e0e0;transform:scaleX(0.905);">FiberMesh</span>
<span style="left:932.8px;top:542.92px;font-size:6.2px;line-height:10px;color:#e0e0e0;transform:scaleX(0.910);">Geometry HD</span>
<span style="left:932.8px;top:555.74px;font-size:6.2px;line-height:10px;color:#e0e0e0;transform:scaleX(0.907);">Preview</span>
<span style="left:932.8px;top:568.56px;font-size:6.2px;line-height:10px;color:#e0e0e0;transform:scaleX(0.889);">Surface</span>
</div></body></html>
